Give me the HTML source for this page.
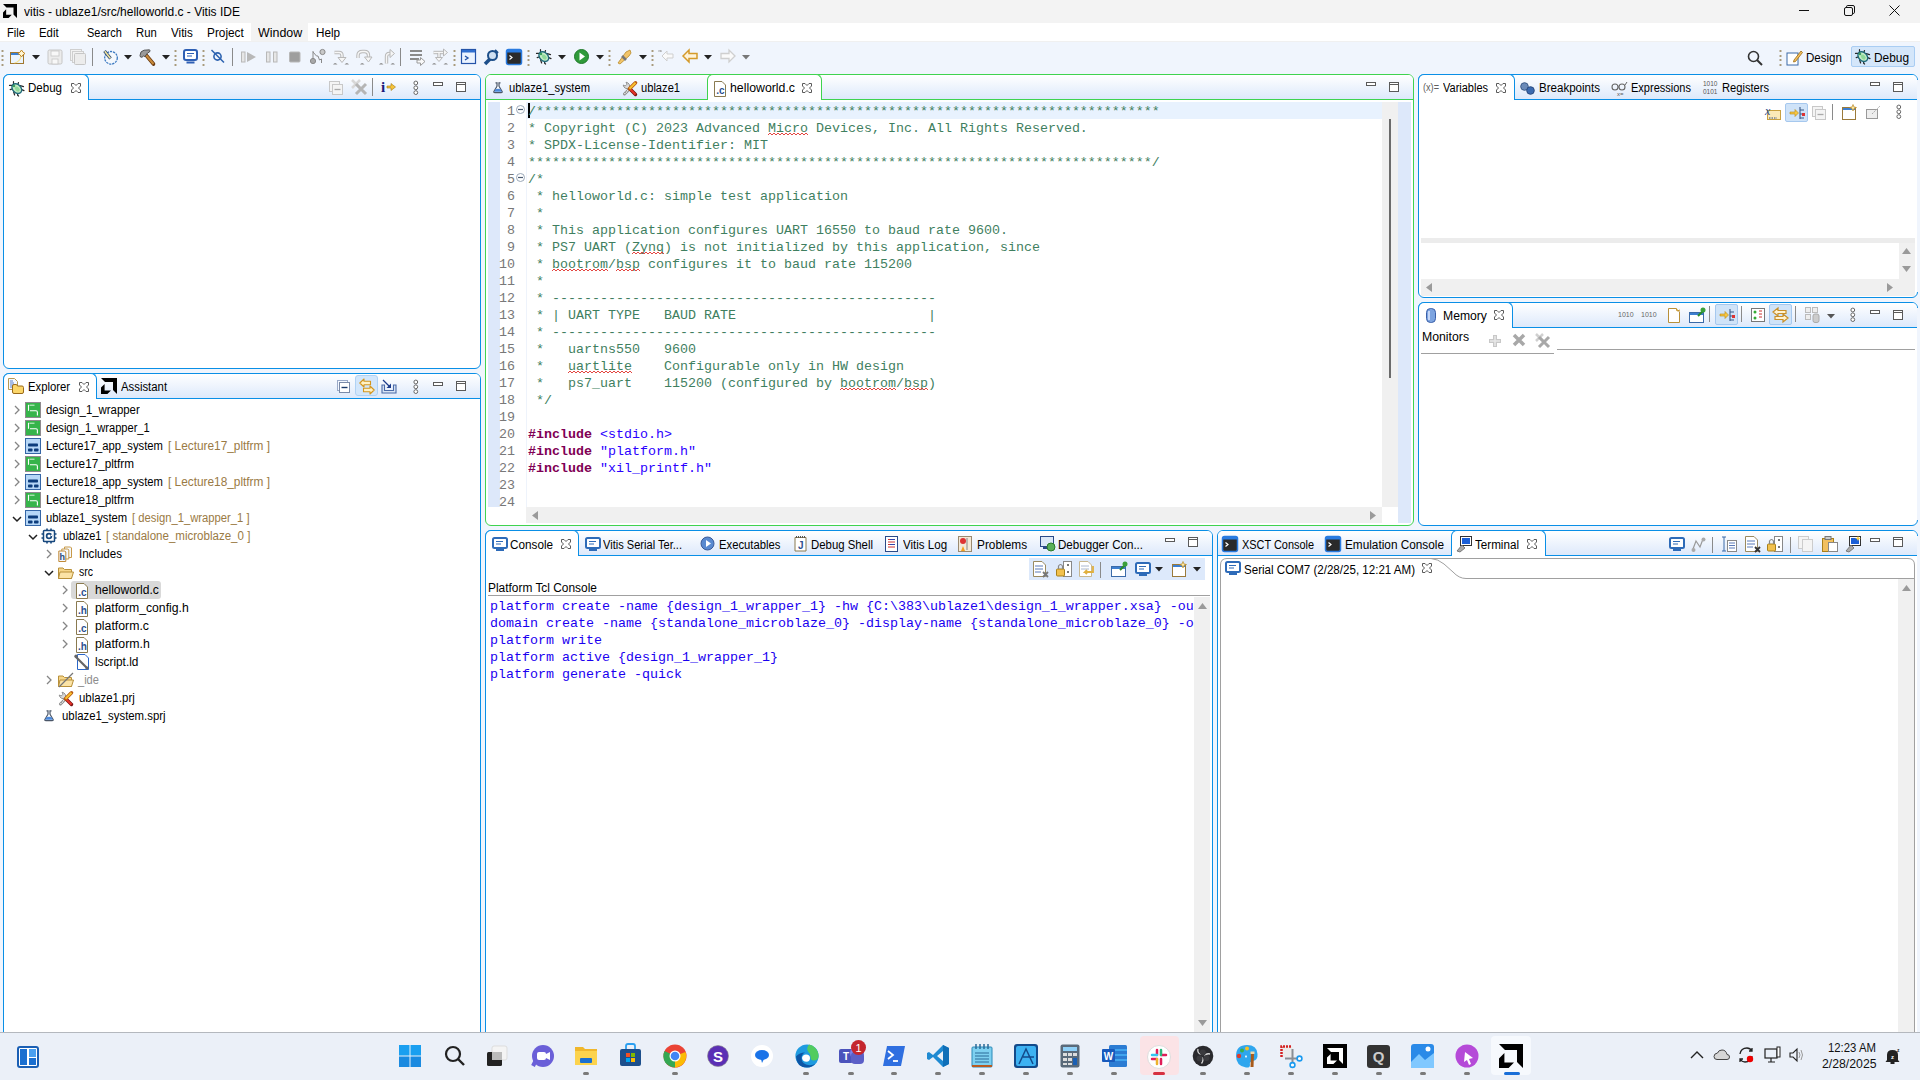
<!DOCTYPE html><html><head><meta charset="utf-8"><style>
html,body{margin:0;padding:0;}
body{width:1920px;height:1080px;overflow:hidden;position:relative;background:#f0f5fd;font-family:"Liberation Sans", sans-serif;font-size:12px;color:#000}
.r{position:absolute;}
.t{position:absolute;white-space:pre;}
svg{overflow:visible}
</style></head><body>

<div class="r" style="left:0px;top:0px;width:1920px;height:23px;background:#f3f3f3;"></div>
<svg class="r" style="left:3px;top:4px;" width="14" height="14" viewBox="0 0 14 14"><g transform="scale(0.875)"><path d="M0 0 H16 V16 L12 12 V4 H4 Z" fill="#000"/><path d="M3.5 5.5 H10.5 V12.5 Z" fill="none"/><path d="M3.6 6 L0 9.6 V16 H6.4 L10 12.4 H3.6 Z" fill="#000"/></g></svg>
<div class="t" style="left:24.00px;top:5.84px;font-size:12px;line-height:12px;color:#000;transform:scaleX(1.0006);transform-origin:0 0;">vitis - ublaze1/src/helloworld.c - Vitis IDE</div>
<div class="r" style="left:1799px;top:10px;width:10px;height:1px;background:#111;"></div>
<svg class="r" style="left:1844px;top:5px;" width="11" height="11" viewBox="0 0 11 11"><rect x="0.5" y="2.5" width="8" height="8" rx="1.5" fill="none" stroke="#111"/><path d="M2.5 2.5 V1.8 Q2.5 0.5 3.8 0.5 H9 Q10.5 0.5 10.5 2 V7.2 Q10.5 8.5 9.2 8.5 H8.5" fill="none" stroke="#111"/></svg>
<svg class="r" style="left:1889px;top:5px;" width="11" height="11" viewBox="0 0 11 11"><path d="M0.5 0.5 L10.5 10.5 M10.5 0.5 L0.5 10.5" stroke="#111" stroke-width="1"/></svg>
<div class="r" style="left:0px;top:23px;width:1920px;height:18px;background:#ffffff;"></div>
<div class="r" style="left:0px;top:41px;width:1920px;height:1px;background:#f0f0f0;"></div>
<div class="r" style="left:251px;top:23px;width:57px;height:18px;background:#f3f3f3;"></div>
<div class="t" style="left:7.10px;top:26.84px;font-size:12px;line-height:12px;color:#000;transform:scaleX(0.9290);transform-origin:0 0;">File</div>
<div class="t" style="left:39.30px;top:26.84px;font-size:12px;line-height:12px;color:#000;transform:scaleX(0.9455);transform-origin:0 0;">Edit</div>
<div class="t" style="left:87.10px;top:26.84px;font-size:12px;line-height:12px;color:#000;transform:scaleX(0.9132);transform-origin:0 0;">Search</div>
<div class="t" style="left:136.00px;top:26.84px;font-size:12px;line-height:12px;color:#000;transform:scaleX(0.9409);transform-origin:0 0;">Run</div>
<div class="t" style="left:170.90px;top:26.84px;font-size:12px;line-height:12px;color:#000;transform:scaleX(0.9689);transform-origin:0 0;">Vitis</div>
<div class="t" style="left:207.20px;top:26.84px;font-size:12px;line-height:12px;color:#000;transform:scaleX(0.9846);transform-origin:0 0;">Project</div>
<div class="t" style="left:257.70px;top:26.84px;font-size:12px;line-height:12px;color:#000;transform:scaleX(1.0363);transform-origin:0 0;">Window</div>
<div class="t" style="left:316.00px;top:26.84px;font-size:12px;line-height:12px;color:#000;transform:scaleX(0.9746);transform-origin:0 0;">Help</div>
<svg class="r" style="left:1px;top:49px;" width="3" height="17" viewBox="0 0 3 17"><rect x="0.5" y="1" width="2" height="2" rx="0.5" fill="#a89a7c"/><rect x="0.5" y="6" width="2" height="2" rx="0.5" fill="#a89a7c"/><rect x="0.5" y="10" width="2" height="2" rx="0.5" fill="#a89a7c"/><rect x="0.5" y="15" width="2" height="2" rx="0.5" fill="#a89a7c"/></svg>
<svg class="r" style="left:10px;top:49px;" width="16" height="16" viewBox="0 0 16 16"><rect x="0.5" y="3.5" width="13" height="11" fill="#eaf4fe" stroke="#a07830"/><rect x="1" y="4" width="12" height="2" fill="#3a7fd0"/><path d="M11 7.5 Q10 12.5 4.5 14" fill="none" stroke="#f5df8a" stroke-width="1.2"/><path d="M11.5 1 L12.9 3.1 L15 4.5 L12.9 5.9 L11.5 8 L10.1 5.9 L8 4.5 L10.1 3.1 Z" fill="#fff6d6" stroke="#c48a26" stroke-width="1"/></svg>
<svg class="r" style="left:32px;top:55px;" width="8" height="5" viewBox="0 0 8 5"><path d="M0 0 L8 0 L4 4.5 Z" fill="#222"/></svg>
<svg class="r" style="left:47px;top:49px;" width="16" height="16" viewBox="0 0 16 16"><rect x="1" y="1" width="14" height="14" rx="1.5" fill="#ececec" stroke="#c6c6c6"/><rect x="4" y="2" width="8" height="5" fill="#f8f8f8" stroke="#c6c6c6" stroke-width="0.8"/><rect x="5" y="10" width="6" height="5" fill="#f8f8f8" stroke="#c6c6c6" stroke-width="0.8"/></svg>
<svg class="r" style="left:70px;top:49px;" width="16" height="16" viewBox="0 0 16 16"><rect x="0.5" y="0.5" width="11" height="11" fill="#f2f2f2" stroke="#cfcfcf"/><rect x="2.5" y="2.5" width="11" height="11" fill="#f2f2f2" stroke="#cfcfcf"/><rect x="4.5" y="4.5" width="11" height="11" rx="1" fill="#ececec" stroke="#c6c6c6"/></svg>
<div class="r" style="left:92px;top:48px;width:1px;height:18px;background:#8a8a8a;"></div>
<svg class="r" style="left:103px;top:49px;" width="16" height="16" viewBox="0 0 16 16"><circle cx="8" cy="8.8" r="6.3" fill="#f4f8fd" stroke="#3a78c0" stroke-width="1.3" stroke-dasharray="2.2 0.9"/><path d="M1.5 2 L7.5 9.5" stroke="#2a4a78" stroke-width="3.2"/><path d="M1.8 2.3 L7.3 9.2" stroke="#f4e49a" stroke-width="1.6"/></svg>
<svg class="r" style="left:124px;top:55px;" width="8" height="5" viewBox="0 0 8 5"><path d="M0 0 L8 0 L4 4.5 Z" fill="#222"/></svg>
<svg class="r" style="left:139px;top:49px;" width="17" height="17" viewBox="0 0 17 17"><path d="M7 6 L14.5 15" stroke="#6a3a10" stroke-width="3.6" stroke-linecap="round"/><path d="M7 6 L14.5 15" stroke="#c88a3a" stroke-width="2"/><path d="M1 6.5 Q1 2 5 1.2 L10.5 0.8 Q11.5 1.5 10.5 3 L8.5 4 L6 7.5 L4.5 7 Q3 9 1.5 8 Z" fill="#9a9a9a" stroke="#4a4a4a" stroke-width="0.9"/></svg>
<svg class="r" style="left:162px;top:55px;" width="8" height="5" viewBox="0 0 8 5"><path d="M0 0 L8 0 L4 4.5 Z" fill="#222"/></svg>
<svg class="r" style="left:174px;top:49px;" width="3" height="17" viewBox="0 0 3 17"><rect x="0.5" y="1" width="2" height="2" rx="0.5" fill="#a89a7c"/><rect x="0.5" y="6" width="2" height="2" rx="0.5" fill="#a89a7c"/><rect x="0.5" y="10" width="2" height="2" rx="0.5" fill="#a89a7c"/><rect x="0.5" y="15" width="2" height="2" rx="0.5" fill="#a89a7c"/></svg>
<svg class="r" style="left:183px;top:49px;" width="15" height="15" viewBox="0 0 15 15"><rect x="1" y="1" width="13" height="10" rx="2" fill="#fff" stroke="#2e5fb4" stroke-width="2"/><path d="M4 4.5 H11 M4 7 H9" stroke="#2e5fb4" stroke-width="1.2"/><rect x="3.5" y="12.5" width="8" height="2" fill="#2e5fb4"/></svg>
<svg class="r" style="left:202px;top:49px;" width="3" height="17" viewBox="0 0 3 17"><rect x="0.5" y="1" width="2" height="2" rx="0.5" fill="#a89a7c"/><rect x="0.5" y="6" width="2" height="2" rx="0.5" fill="#a89a7c"/><rect x="0.5" y="10" width="2" height="2" rx="0.5" fill="#a89a7c"/><rect x="0.5" y="15" width="2" height="2" rx="0.5" fill="#a89a7c"/></svg>
<svg class="r" style="left:211px;top:49px;" width="14" height="14" viewBox="0 0 14 14"><circle cx="6.5" cy="7.5" r="3.6" fill="none" stroke="#2c62b0" stroke-width="1.6"/><path d="M0.5 1 L13 13.5" stroke="#2c62b0" stroke-width="1.5"/></svg>
<div class="r" style="left:232px;top:48px;width:1px;height:18px;background:#8a8a8a;"></div>
<svg class="r" style="left:241px;top:49px;" width="16" height="16" viewBox="0 0 16 16"><rect x="0.5" y="3" width="3.5" height="10" fill="#e6e6e6" stroke="#b8b8b8"/><path d="M6 3 L15 8 L6 13 Z" fill="#b8b8b8"/></svg>
<svg class="r" style="left:266px;top:49px;" width="12" height="16" viewBox="0 0 12 16"><rect x="0.5" y="3" width="3.5" height="10" fill="#e6e6e6" stroke="#b8b8b8"/><rect x="7.5" y="3" width="3.5" height="10" fill="#e6e6e6" stroke="#b8b8b8"/></svg>
<svg class="r" style="left:289px;top:49px;" width="12" height="16" viewBox="0 0 12 16"><rect x="0.5" y="3" width="10.5" height="10" rx="1" fill="#9e9e9e" stroke="#b8b8b8"/></svg>
<svg class="r" style="left:310px;top:49px;" width="16" height="16" viewBox="0 0 16 16"><path d="M3 2 V12 M3 3 L6.5 7 H8 L9.5 11 L11.5 10 V14" fill="none" stroke="#8a8a8a" stroke-width="1"/><circle cx="3" cy="12" r="2.6" fill="#a8a8a8" stroke="#8a8a8a"/><circle cx="12.5" cy="3" r="2.6" fill="#c8c8c8" stroke="#8a8a8a"/></svg>
<svg class="r" style="left:333px;top:49px;" width="16" height="16" viewBox="0 0 16 16"><path d="M1.5 3.5 H6 Q9 3.5 9 6.5 V9" fill="none" stroke="#b8b8b8" stroke-width="3.4" stroke-linejoin="round"/><path d="M1.5 3.5 H6 Q9 3.5 9 6.5 V9" fill="none" stroke="#f6f6f6" stroke-width="1.4"/><path d="M5 8.5 L9 13.5 L13 8.5 Z" fill="#f6f6f6" stroke="#b8b8b8"/><path d="M0 15.5 Q2 12.5 4.5 15.5 Z M11.5 15.5 Q14 12.5 16 15.5 Z" fill="#8c8c8c"/></svg>
<svg class="r" style="left:356px;top:49px;" width="16" height="16" viewBox="0 0 16 16"><path d="M2 9 V6.5 Q2 2.5 6.5 2.5 H8.5 Q12.5 2.5 12.5 6.5 V8.5" fill="none" stroke="#b8b8b8" stroke-width="3.4" stroke-linejoin="round"/><path d="M2 9 V6.5 Q2 2.5 6.5 2.5 H8.5 Q12.5 2.5 12.5 6.5 V8.5" fill="none" stroke="#f6f6f6" stroke-width="1.4"/><path d="M8.5 8 L12.5 13 L16 8 Z" fill="#f6f6f6" stroke="#b8b8b8"/><path d="M4 15.5 Q6 12.5 8.5 15.5 Z" fill="#8c8c8c"/></svg>
<svg class="r" style="left:379px;top:49px;" width="16" height="16" viewBox="0 0 16 16"><path d="M7.5 14.5 V7.5 Q7.5 4.5 10.5 4.5 H11.5" fill="none" stroke="#b8b8b8" stroke-width="3.4" stroke-linejoin="round"/><path d="M7.5 14.5 V7.5 Q7.5 4.5 10.5 4.5 H11.5" fill="none" stroke="#f6f6f6" stroke-width="1.4"/><path d="M11 0.5 L15.5 4.5 L11 8.5 Z" fill="#f6f6f6" stroke="#b8b8b8"/><path d="M0 15.5 Q2 12.5 4.5 15.5 Z M11.5 15.5 Q14 12.5 16 15.5 Z" fill="#8c8c8c"/></svg>
<div class="r" style="left:400px;top:48px;width:1px;height:18px;background:#8a8a8a;"></div>
<svg class="r" style="left:410px;top:49px;" width="16" height="17" viewBox="0 0 16 17"><rect x="0" y="1" width="12" height="2" fill="#8a8a8a"/><rect x="0" y="5" width="12" height="2" fill="#8a8a8a"/><rect x="0" y="9" width="9" height="2" fill="#8a8a8a"/><path d="M7 11 H10.5 V8.5 L15 12.5 L10.5 16.5 V14 H7 Z" fill="#fafafa" stroke="#9a9a9a"/></svg>
<svg class="r" style="left:432px;top:49px;" width="16" height="16" viewBox="0 0 16 16"><path d="M1.5 3.5 H12" fill="none" stroke="#b8b8b8" stroke-width="3.4" stroke-linejoin="round"/><path d="M1.5 3.5 H12" fill="none" stroke="#f6f6f6" stroke-width="1.4"/><path d="M11.5 0 L15.5 3.5 L11.5 7 Z" fill="#f6f6f6" stroke="#b8b8b8"/><path d="M7 4 V9" fill="none" stroke="#b8b8b8" stroke-width="3.4" stroke-linejoin="round"/><path d="M7 4 V9" fill="none" stroke="#f6f6f6" stroke-width="1.4"/><path d="M3.5 8.5 L7 12.5 L10.5 8.5 Z" fill="#f6f6f6" stroke="#b8b8b8"/><path d="M0 15.5 Q2 12.5 4.5 15.5 Z M11.5 15.5 Q14 12.5 16 15.5 Z" fill="#8c8c8c"/></svg>
<svg class="r" style="left:453px;top:49px;" width="3" height="17" viewBox="0 0 3 17"><rect x="0.5" y="1" width="2" height="2" rx="0.5" fill="#a89a7c"/><rect x="0.5" y="6" width="2" height="2" rx="0.5" fill="#a89a7c"/><rect x="0.5" y="10" width="2" height="2" rx="0.5" fill="#a89a7c"/><rect x="0.5" y="15" width="2" height="2" rx="0.5" fill="#a89a7c"/></svg>
<svg class="r" style="left:461px;top:49px;" width="15" height="15" viewBox="0 0 15 15"><rect x="0.5" y="0.5" width="14" height="14" fill="#eaf3ff" stroke="#2453a8" stroke-width="1.2"/><rect x="1" y="1" width="13" height="2.5" fill="#2f6fd0"/><path d="M4 7 L7 9 L4 11" fill="none" stroke="#2453a8" stroke-width="1.4"/></svg>
<svg class="r" style="left:483px;top:49px;" width="16" height="16" viewBox="0 0 16 16"><path d="M2 15 L7 10" stroke="#1d4f8a" stroke-width="3.5"/><circle cx="9.5" cy="6.5" r="4.5" fill="#cfe0f2" stroke="#1d4f8a" stroke-width="2"/><path d="M12 1 L15 4" stroke="#1d4f8a" stroke-width="2"/></svg>
<svg class="r" style="left:506px;top:49px;" width="16" height="16" viewBox="0 0 16 16"><rect x="0.5" y="0.5" width="15" height="15" rx="2" fill="#2a2a2a" stroke="#2a7be0" stroke-width="1.5"/><rect x="1" y="1" width="14" height="2.5" fill="#2a7be0"/><path d="M3.5 6.5 L6 8.5 L3.5 10.5" fill="none" stroke="#fff" stroke-width="1.2"/></svg>
<svg class="r" style="left:527px;top:49px;" width="3" height="17" viewBox="0 0 3 17"><rect x="0.5" y="1" width="2" height="2" rx="0.5" fill="#a89a7c"/><rect x="0.5" y="6" width="2" height="2" rx="0.5" fill="#a89a7c"/><rect x="0.5" y="10" width="2" height="2" rx="0.5" fill="#a89a7c"/><rect x="0.5" y="15" width="2" height="2" rx="0.5" fill="#a89a7c"/></svg>
<svg class="r" style="left:536px;top:49px;" width="16" height="16" viewBox="0 0 16 16"><g stroke="#2a2a2a" stroke-width="1.2" stroke-linecap="round" fill="none"><path d="M4.5 0.5 V3.5 M9.5 1.5 L8.6 4.2 M0.5 4.4 H3.8 M11.2 4.6 L14.5 5.6 M1.2 8.6 L3.8 7.8 M12.2 8.4 L15 9.6 M4.6 10.8 L5.6 14 M8.6 12.4 V14.2 L9.6 15"/></g><ellipse cx="7.8" cy="7.6" rx="4.1" ry="5.6" transform="rotate(-45 7.8 7.6)" fill="#c6ecc6" stroke="#1f6a7a" stroke-width="1.4"/><ellipse cx="8.3" cy="8.1" rx="2" ry="2.8" transform="rotate(-45 8.3 8.1)" fill="#8fd99a"/><circle cx="5" cy="5" r="1.3" fill="#3aa05a"/></svg>
<svg class="r" style="left:558px;top:55px;" width="8" height="5" viewBox="0 0 8 5"><path d="M0 0 L8 0 L4 4.5 Z" fill="#222"/></svg>
<svg class="r" style="left:574px;top:49px;" width="15" height="15" viewBox="0 0 15 15"><circle cx="7.5" cy="7.5" r="7" fill="#2f9a3a" stroke="#1f7a2a"/><path d="M5.5 3.5 L11 7.5 L5.5 11.5 Z" fill="#fff"/></svg>
<svg class="r" style="left:596px;top:55px;" width="8" height="5" viewBox="0 0 8 5"><path d="M0 0 L8 0 L4 4.5 Z" fill="#222"/></svg>
<svg class="r" style="left:608px;top:49px;" width="3" height="17" viewBox="0 0 3 17"><rect x="0.5" y="1" width="2" height="2" rx="0.5" fill="#a89a7c"/><rect x="0.5" y="6" width="2" height="2" rx="0.5" fill="#a89a7c"/><rect x="0.5" y="10" width="2" height="2" rx="0.5" fill="#a89a7c"/><rect x="0.5" y="15" width="2" height="2" rx="0.5" fill="#a89a7c"/></svg>
<svg class="r" style="left:616px;top:49px;" width="16" height="16" viewBox="0 0 16 16"><path d="M2 14 L10 3 L14 1 L15 4 L13 7 L4 15 Z" fill="#f2c46a" stroke="#b88a2a" stroke-width="0.8"/><path d="M6 7 L10 11" stroke="#777" stroke-width="2.5"/></svg>
<svg class="r" style="left:639px;top:55px;" width="8" height="5" viewBox="0 0 8 5"><path d="M0 0 L8 0 L4 4.5 Z" fill="#222"/></svg>
<svg class="r" style="left:651px;top:49px;" width="3" height="17" viewBox="0 0 3 17"><rect x="0.5" y="1" width="2" height="2" rx="0.5" fill="#a89a7c"/><rect x="0.5" y="6" width="2" height="2" rx="0.5" fill="#a89a7c"/><rect x="0.5" y="10" width="2" height="2" rx="0.5" fill="#a89a7c"/><rect x="0.5" y="15" width="2" height="2" rx="0.5" fill="#a89a7c"/></svg>
<svg class="r" style="left:658px;top:49px;" width="16" height="14" viewBox="0 0 16 14"><path d="M4 7 L9 2 V5 H15 V9 H9 V12 Z" fill="#fafafa" stroke="#cfcfcf"/><path d="M2 1 L3 3 M0 2 H4" stroke="#aaa"/></svg>
<svg class="r" style="left:682px;top:49px;" width="16" height="14" viewBox="0 0 16 14"><path d="M1 7 L7 1 V4.5 H15 V9.5 H7 V13 Z" fill="#fff3d8" stroke="#d49a2a" stroke-width="1.5"/></svg>
<svg class="r" style="left:704px;top:55px;" width="8" height="5" viewBox="0 0 8 5"><path d="M0 0 L8 0 L4 4.5 Z" fill="#222"/></svg>
<svg class="r" style="left:720px;top:49px;" width="16" height="14" viewBox="0 0 16 14"><path d="M15 7 L9 1 V4.5 H1 V9.5 H9 V13 Z" fill="#fafafa" stroke="#cfcfcf" stroke-width="1.3"/></svg>
<svg class="r" style="left:742px;top:55px;" width="8" height="5" viewBox="0 0 8 5"><path d="M0 0 L8 0 L4 4.5 Z" fill="#777"/></svg>
<svg class="r" style="left:1747px;top:50px;" width="16" height="16" viewBox="0 0 16 16"><circle cx="6.5" cy="6.5" r="5" fill="none" stroke="#333" stroke-width="1.6"/><path d="M10 10 L15 15" stroke="#333" stroke-width="2"/></svg>
<svg class="r" style="left:1779px;top:49px;" width="3" height="17" viewBox="0 0 3 17"><rect x="0.5" y="1" width="2" height="2" rx="0.5" fill="#a89a7c"/><rect x="0.5" y="6" width="2" height="2" rx="0.5" fill="#a89a7c"/><rect x="0.5" y="10" width="2" height="2" rx="0.5" fill="#a89a7c"/><rect x="0.5" y="15" width="2" height="2" rx="0.5" fill="#a89a7c"/></svg>
<svg class="r" style="left:1786px;top:49px;" width="17" height="17" viewBox="0 0 17 17"><rect x="1" y="4" width="11" height="12" fill="#fff" stroke="#3a6aa8"/><path d="M8 11 L15 2 L16.5 3.5 L9.5 12.5 L7.5 13 Z" fill="#f3c060" stroke="#9a6a10" stroke-width="0.8"/></svg>
<div class="t" style="left:1806.00px;top:51.84px;font-size:12px;line-height:12px;color:#000;transform:scaleX(0.9632);transform-origin:0 0;">Design</div>
<div class="r" style="left:1851px;top:46px;width:64px;height:21px;background:#d4e6fa;border:1px solid #a9cdf3;box-sizing:border-box;border-radius:2px"></div>
<svg class="r" style="left:1855px;top:49px;" width="16" height="16" viewBox="0 0 16 16"><g stroke="#2a2a2a" stroke-width="1.2" stroke-linecap="round" fill="none"><path d="M4.5 0.5 V3.5 M9.5 1.5 L8.6 4.2 M0.5 4.4 H3.8 M11.2 4.6 L14.5 5.6 M1.2 8.6 L3.8 7.8 M12.2 8.4 L15 9.6 M4.6 10.8 L5.6 14 M8.6 12.4 V14.2 L9.6 15"/></g><ellipse cx="7.8" cy="7.6" rx="4.1" ry="5.6" transform="rotate(-45 7.8 7.6)" fill="#c6ecc6" stroke="#1f6a7a" stroke-width="1.4"/><ellipse cx="8.3" cy="8.1" rx="2" ry="2.8" transform="rotate(-45 8.3 8.1)" fill="#8fd99a"/><circle cx="5" cy="5" r="1.3" fill="#3aa05a"/></svg>
<div class="t" style="left:1874.00px;top:51.84px;font-size:12px;line-height:12px;color:#000;transform:scaleX(0.9894);transform-origin:0 0;">Debug</div>
<div class="r" style="left:3px;top:74px;width:478px;height:295px;border:1px solid #0a8fe6;border-radius:6px;background:#fff;box-sizing:border-box;overflow:hidden">
<div class="r" style="left:0;top:0;width:100%;height:24px;background:linear-gradient(#ffffff,#dde9fb)"></div>
<div class="r" style="left:0;top:24px;width:100%;height:1px;background:#0a8fe6"></div>
</div>
<div class="r" style="left:3px;top:74px;width:86px;height:26px;background:#fff;border:1px solid #0a8fe6;border-bottom:none;border-radius:6px 6px 0 0;box-sizing:border-box"></div>
<svg class="r" style="left:9px;top:81px;" width="16" height="16" viewBox="0 0 16 16"><g stroke="#2a2a2a" stroke-width="1.2" stroke-linecap="round" fill="none"><path d="M4.5 0.5 V3.5 M9.5 1.5 L8.6 4.2 M0.5 4.4 H3.8 M11.2 4.6 L14.5 5.6 M1.2 8.6 L3.8 7.8 M12.2 8.4 L15 9.6 M4.6 10.8 L5.6 14 M8.6 12.4 V14.2 L9.6 15"/></g><ellipse cx="7.8" cy="7.6" rx="4.1" ry="5.6" transform="rotate(-45 7.8 7.6)" fill="#c6ecc6" stroke="#1f6a7a" stroke-width="1.4"/><ellipse cx="8.3" cy="8.1" rx="2" ry="2.8" transform="rotate(-45 8.3 8.1)" fill="#8fd99a"/><circle cx="5" cy="5" r="1.3" fill="#3aa05a"/></svg>
<div class="t" style="left:28.00px;top:81.84px;font-size:12px;line-height:12px;color:#000;transform:scaleX(0.9611);transform-origin:0 0;">Debug</div>
<svg class="r" style="left:71px;top:83px;" width="11" height="11" viewBox="0 0 11 11"><path d="M0.5 0.5 H3 L5 2.5 L7 0.5 H9.5 V3 L7.5 5 L9.5 7 V9.5 H7 L5 7.5 L3 9.5 H0.5 V7 L2.5 5 L0.5 3 Z" fill="#fff" stroke="#5a5a5a" stroke-width="1"/></svg>
<svg class="r" style="left:329px;top:81px;" width="14" height="14" viewBox="0 0 14 14"><rect x="0.5" y="0.5" width="10" height="10" fill="#f4f4f4" stroke="#c8c8c8"/><rect x="3.5" y="3.5" width="10" height="10" fill="#f4f4f4" stroke="#c8c8c8"/><path d="M5.5 8.5 H11.5" stroke="#aaa" stroke-width="1.3"/></svg>
<svg class="r" style="left:351px;top:79px;" width="16" height="16" viewBox="0 0 16 16"><path d="M1 1 L9 9 M9 1 L1 9" stroke="#d8d8d8" stroke-width="2.5"/><path d="M5 5 L15 15 M15 5 L5 15" stroke="#b5b5b5" stroke-width="3"/></svg>
<div class="r" style="left:372px;top:78px;width:1px;height:18px;background:#8a8a8a;"></div>
<svg class="r" style="left:381px;top:80px;" width="16" height="14" viewBox="0 0 16 14"><text x="0" y="12" font-family="Liberation Serif" font-size="15" font-weight="bold" fill="#1a1a7a">i</text><path d="M6 6 H10 V3.5 L14.5 7 L10 10.5 V8 H6 Z" fill="#f6c33a" stroke="#a57a10" stroke-width="0.6"/></svg>
<svg class="r" style="left:413px;top:80px;" width="6" height="16" viewBox="0 0 6 16"><circle cx="2.8" cy="3" r="1.9" fill="#fff" stroke="#666" stroke-width="1"/><circle cx="2.8" cy="7.8" r="1.9" fill="#fff" stroke="#666" stroke-width="1"/><circle cx="2.8" cy="12.6" r="1.9" fill="#fff" stroke="#666" stroke-width="1"/></svg>
<svg class="r" style="left:433px;top:82px;" width="10" height="4" viewBox="0 0 10 4"><rect x="0.5" y="0.5" width="9" height="3" fill="#fff" stroke="#5a5a5a"/></svg>
<svg class="r" style="left:456px;top:82px;" width="10" height="10" viewBox="0 0 10 10"><rect x="0.5" y="0.5" width="9" height="9" fill="#fff" stroke="#5a5a5a"/><line x1="0" y1="2.5" x2="10" y2="2.5" stroke="#5a5a5a"/></svg>
<div class="r" style="left:3px;top:373px;width:478px;height:720px;border:1px solid #0a8fe6;border-radius:6px;background:#fff;box-sizing:border-box;overflow:hidden">
<div class="r" style="left:0;top:0;width:100%;height:24px;background:linear-gradient(#ffffff,#dde9fb)"></div>
<div class="r" style="left:0;top:24px;width:100%;height:1px;background:#0a8fe6"></div>
</div>
<div class="r" style="left:3px;top:373px;width:94px;height:26px;background:#fff;border:1px solid #0a8fe6;border-bottom:none;border-radius:6px 6px 0 0;box-sizing:border-box"></div>
<svg class="r" style="left:8px;top:378px;" width="16" height="16" viewBox="0 0 16 16"><path d="M0.5 0.5 H6.5 L9.5 3.5 V11.5 H0.5 Z" fill="#f4f8ff" stroke="#b89a50"/><path d="M2 3 H5 M2 5 H6 M2 7 H6 M2 9 H5" stroke="#5a80c8" stroke-width="1"/><path d="M4.5 8 Q4.5 6.5 6 6.5 H8.5 L9.5 8 H14 Q15.5 8 15.5 9.5 V14 Q15.5 15.5 14 15.5 H6 Q4.5 15.5 4.5 14 Z" fill="#fbd66a" stroke="#9a6a1a"/></svg>
<div class="t" style="left:28.00px;top:380.84px;font-size:12px;line-height:12px;color:#000;transform:scaleX(0.9412);transform-origin:0 0;">Explorer</div>
<svg class="r" style="left:79px;top:382px;" width="11" height="11" viewBox="0 0 11 11"><path d="M0.5 0.5 H3 L5 2.5 L7 0.5 H9.5 V3 L7.5 5 L9.5 7 V9.5 H7 L5 7.5 L3 9.5 H0.5 V7 L2.5 5 L0.5 3 Z" fill="#fff" stroke="#5a5a5a" stroke-width="1"/></svg>
<svg class="r" style="left:101px;top:378px;" width="16" height="16" viewBox="0 0 16 16"><g transform="scale(1)"><path d="M0 0 H16 V16 L12 12 V4 H4 Z" fill="#000"/><path d="M3.5 5.5 H10.5 V12.5 Z" fill="none"/><path d="M3.6 6 L0 9.6 V16 H6.4 L10 12.4 H3.6 Z" fill="#000"/></g></svg>
<div class="t" style="left:121.00px;top:380.84px;font-size:12px;line-height:12px;color:#000;transform:scaleX(0.9460);transform-origin:0 0;">Assistant</div>
<svg class="r" style="left:337px;top:380px;" width="13" height="13" viewBox="0 0 13 13"><rect x="0.5" y="0.5" width="10" height="10" fill="#f4f8ff" stroke="#9aaac8"/><rect x="2.5" y="2.5" width="10" height="10" fill="#fff" stroke="#7a8aa8"/><path d="M4.5 7.5 H10.5" stroke="#1a3a6a" stroke-width="1.4"/></svg>
<div class="r" style="left:355px;top:375px;width:23px;height:21px;background:#d2e6fb;border:1px solid #b0d2f4;box-sizing:border-box;border-radius:3px"></div>
<svg class="r" style="left:359px;top:378px;" width="16" height="16" viewBox="0 0 16 16"><path d="M0.8 5 L5 1 V3.2 H11.5 V6.8 H5 V9 Z" fill="#fff2c6" stroke="#d4961e" stroke-width="1.1" stroke-linejoin="round"/><path d="M15.2 12 L11 8 V10.2 H4.5 V13.8 H11 V16 Z" fill="#fff2c6" stroke="#d4961e" stroke-width="1.1" stroke-linejoin="round"/></svg>
<svg class="r" style="left:381px;top:379px;" width="16" height="15" viewBox="0 0 16 15"><path d="M1 6 V14 H15 V6 H12.5 V11.5 H3.5 V6 Z" fill="#d8e4f4" stroke="#4a6aa8" stroke-width="1.1"/><path d="M2 1 L9 8" stroke="#1a3a8a" stroke-width="1.2"/><path d="M10 9 L10 4.5 L5.5 9 Z" fill="#1a3a8a"/></svg>
<svg class="r" style="left:413px;top:379px;" width="6" height="16" viewBox="0 0 6 16"><circle cx="2.8" cy="3" r="1.9" fill="#fff" stroke="#666" stroke-width="1"/><circle cx="2.8" cy="7.8" r="1.9" fill="#fff" stroke="#666" stroke-width="1"/><circle cx="2.8" cy="12.6" r="1.9" fill="#fff" stroke="#666" stroke-width="1"/></svg>
<svg class="r" style="left:433px;top:382px;" width="10" height="4" viewBox="0 0 10 4"><rect x="0.5" y="0.5" width="9" height="3" fill="#fff" stroke="#5a5a5a"/></svg>
<svg class="r" style="left:456px;top:381px;" width="10" height="10" viewBox="0 0 10 10"><rect x="0.5" y="0.5" width="9" height="9" fill="#fff" stroke="#5a5a5a"/><line x1="0" y1="2.5" x2="10" y2="2.5" stroke="#5a5a5a"/></svg>
<svg class="r" style="left:13px;top:405px;" width="8" height="10" viewBox="0 0 8 10"><path d="M2 1 L6 5 L2 9" fill="none" stroke="#858585" stroke-width="1.3"/></svg>
<svg class="r" style="left:25px;top:402px;" width="16" height="16" viewBox="0 0 16 16"><rect x="0.5" y="0.5" width="15" height="15" fill="#36b44a" stroke="#8e8a8e"/><path d="M3.5 2.8 V8.8" stroke="#fff" stroke-width="1.1"/><path d="M4.5 3.2 H9.5" stroke="#d8f5d8" stroke-width="1"/><path d="M5 8.8 H11 Q12.4 8.8 12.4 10.2 V13.6" fill="none" stroke="#fff" stroke-width="1.1"/></svg>
<div class="t" style="left:46.25px;top:403.84px;font-size:12px;line-height:12px;color:#000;transform:scaleX(0.9494);transform-origin:0 0;">design_1_wrapper</div>
<svg class="r" style="left:13px;top:423px;" width="8" height="10" viewBox="0 0 8 10"><path d="M2 1 L6 5 L2 9" fill="none" stroke="#858585" stroke-width="1.3"/></svg>
<svg class="r" style="left:25px;top:420px;" width="16" height="16" viewBox="0 0 16 16"><rect x="0.5" y="0.5" width="15" height="15" fill="#36b44a" stroke="#8e8a8e"/><path d="M3.5 2.8 V8.8" stroke="#fff" stroke-width="1.1"/><path d="M4.5 3.2 H9.5" stroke="#d8f5d8" stroke-width="1"/><path d="M5 8.8 H11 Q12.4 8.8 12.4 10.2 V13.6" fill="none" stroke="#fff" stroke-width="1.1"/></svg>
<div class="t" style="left:46.25px;top:421.84px;font-size:12px;line-height:12px;color:#000;transform:scaleX(0.9253);transform-origin:0 0;">design_1_wrapper_1</div>
<svg class="r" style="left:13px;top:441px;" width="8" height="10" viewBox="0 0 8 10"><path d="M2 1 L6 5 L2 9" fill="none" stroke="#858585" stroke-width="1.3"/></svg>
<svg class="r" style="left:25px;top:438px;" width="16" height="16" viewBox="0 0 16 16"><rect x="0.5" y="0.5" width="15" height="15" fill="#b6d7f7" stroke="#3566a6"/><rect x="3" y="5.5" width="10" height="3" rx="0.8" fill="#0d3d7c"/><rect x="3" y="10.5" width="4.5" height="3" rx="0.8" fill="#0d3d7c"/><rect x="9" y="10.5" width="4.5" height="3" rx="0.8" fill="#0d3d7c"/></svg>
<div class="t" style="left:46.25px;top:439.84px;font-size:12px;line-height:12px;color:#000;transform:scaleX(0.9379);transform-origin:0 0;">Lecture17_app_system</div>
<div class="t" style="left:167.50px;top:439.84px;font-size:12px;line-height:12px;color:#9a7a44;transform:scaleX(0.9867);transform-origin:0 0;">[ Lecture17_pltfrm ]</div>
<svg class="r" style="left:13px;top:459px;" width="8" height="10" viewBox="0 0 8 10"><path d="M2 1 L6 5 L2 9" fill="none" stroke="#858585" stroke-width="1.3"/></svg>
<svg class="r" style="left:25px;top:456px;" width="16" height="16" viewBox="0 0 16 16"><rect x="0.5" y="0.5" width="15" height="15" fill="#36b44a" stroke="#8e8a8e"/><path d="M3.5 2.8 V8.8" stroke="#fff" stroke-width="1.1"/><path d="M4.5 3.2 H9.5" stroke="#d8f5d8" stroke-width="1"/><path d="M5 8.8 H11 Q12.4 8.8 12.4 10.2 V13.6" fill="none" stroke="#fff" stroke-width="1.1"/></svg>
<div class="t" style="left:46.25px;top:457.84px;font-size:12px;line-height:12px;color:#000;transform:scaleX(0.9778);transform-origin:0 0;">Lecture17_pltfrm</div>
<svg class="r" style="left:13px;top:477px;" width="8" height="10" viewBox="0 0 8 10"><path d="M2 1 L6 5 L2 9" fill="none" stroke="#858585" stroke-width="1.3"/></svg>
<svg class="r" style="left:25px;top:474px;" width="16" height="16" viewBox="0 0 16 16"><rect x="0.5" y="0.5" width="15" height="15" fill="#b6d7f7" stroke="#3566a6"/><rect x="3" y="5.5" width="10" height="3" rx="0.8" fill="#0d3d7c"/><rect x="3" y="10.5" width="4.5" height="3" rx="0.8" fill="#0d3d7c"/><rect x="9" y="10.5" width="4.5" height="3" rx="0.8" fill="#0d3d7c"/></svg>
<div class="t" style="left:46.25px;top:475.84px;font-size:12px;line-height:12px;color:#000;transform:scaleX(0.9379);transform-origin:0 0;">Lecture18_app_system</div>
<div class="t" style="left:167.50px;top:475.84px;font-size:12px;line-height:12px;color:#9a7a44;transform:scaleX(0.9867);transform-origin:0 0;">[ Lecture18_pltfrm ]</div>
<svg class="r" style="left:13px;top:495px;" width="8" height="10" viewBox="0 0 8 10"><path d="M2 1 L6 5 L2 9" fill="none" stroke="#858585" stroke-width="1.3"/></svg>
<svg class="r" style="left:25px;top:492px;" width="16" height="16" viewBox="0 0 16 16"><rect x="0.5" y="0.5" width="15" height="15" fill="#36b44a" stroke="#8e8a8e"/><path d="M3.5 2.8 V8.8" stroke="#fff" stroke-width="1.1"/><path d="M4.5 3.2 H9.5" stroke="#d8f5d8" stroke-width="1"/><path d="M5 8.8 H11 Q12.4 8.8 12.4 10.2 V13.6" fill="none" stroke="#fff" stroke-width="1.1"/></svg>
<div class="t" style="left:46.25px;top:493.84px;font-size:12px;line-height:12px;color:#000;transform:scaleX(0.9778);transform-origin:0 0;">Lecture18_pltfrm</div>
<svg class="r" style="left:12px;top:515px;" width="10" height="8" viewBox="0 0 10 8"><path d="M1 2 L5 6 L9 2" fill="none" stroke="#202020" stroke-width="1.5"/></svg>
<svg class="r" style="left:25px;top:510px;" width="16" height="16" viewBox="0 0 16 16"><rect x="0.5" y="0.5" width="15" height="15" fill="#b6d7f7" stroke="#3566a6"/><rect x="3" y="5.5" width="10" height="3" rx="0.8" fill="#0d3d7c"/><rect x="3" y="10.5" width="4.5" height="3" rx="0.8" fill="#0d3d7c"/><rect x="9" y="10.5" width="4.5" height="3" rx="0.8" fill="#0d3d7c"/></svg>
<div class="t" style="left:46.25px;top:511.84px;font-size:12px;line-height:12px;color:#000;transform:scaleX(0.9366);transform-origin:0 0;">ublaze1_system</div>
<div class="t" style="left:131.90px;top:511.84px;font-size:12px;line-height:12px;color:#9a7a44;transform:scaleX(0.9372);transform-origin:0 0;">[ design_1_wrapper_1 ]</div>
<svg class="r" style="left:28px;top:533px;" width="10" height="8" viewBox="0 0 10 8"><path d="M1 2 L5 6 L9 2" fill="none" stroke="#202020" stroke-width="1.5"/></svg>
<svg class="r" style="left:41px;top:528px;" width="16" height="16" viewBox="0 0 16 16"><rect x="2.5" y="2.5" width="11" height="11" rx="0.8" fill="#fff" stroke="#17487e" stroke-width="1.5"/><path d="M6 0.5 V3 M10 0.5 V3 M6 13 V15.5 M10 13 V15.5 M0.5 6 H3 M0.5 10 H3 M13 6 H15.5 M13 10 H15.5" stroke="#17487e" stroke-width="1.6"/><circle cx="8" cy="8" r="2.4" fill="none" stroke="#17487e" stroke-width="1.7"/><path d="M9.8 7.2 H11" stroke="#fff" stroke-width="1.4"/></svg>
<div class="t" style="left:62.50px;top:529.84px;font-size:12px;line-height:12px;color:#000;transform:scaleX(0.9143);transform-origin:0 0;">ublaze1</div>
<div class="t" style="left:105.60px;top:529.84px;font-size:12px;line-height:12px;color:#9a7a44;transform:scaleX(0.9619);transform-origin:0 0;">[ standalone_microblaze_0 ]</div>
<svg class="r" style="left:45px;top:549px;" width="8" height="10" viewBox="0 0 8 10"><path d="M2 1 L6 5 L2 9" fill="none" stroke="#858585" stroke-width="1.3"/></svg>
<svg class="r" style="left:58px;top:546px;" width="16" height="16" viewBox="0 0 16 16"><path d="M6.5 1 H12.5 L13.5 2 V11.5 H6.5 Z" fill="#f4f8ff" stroke="#c89a48"/><path d="M3.8 3 H9.8 L10.8 4 V13 H3.8 Z" fill="#f4f8ff" stroke="#c89a48"/><path d="M0.8 5 H6.8 L7.8 6 V15.5 H0.8 Z" fill="#f4f8ff" stroke="#c08a38"/><text x="4.3" y="14" font-family="Liberation Sans" font-size="9" font-weight="bold" fill="#2a4a7a" text-anchor="middle">h</text></svg>
<div class="t" style="left:78.75px;top:547.84px;font-size:12px;line-height:12px;color:#000;transform:scaleX(0.9609);transform-origin:0 0;">Includes</div>
<svg class="r" style="left:44px;top:569px;" width="10" height="8" viewBox="0 0 10 8"><path d="M1 2 L5 6 L9 2" fill="none" stroke="#202020" stroke-width="1.5"/></svg>
<svg class="r" style="left:58px;top:566px;" width="16" height="13" viewBox="0 0 16 13"><path d="M0.5 2 H5 L6.5 3.5 H13.5 V12.5 H0.5 Z" fill="#f6d68a" stroke="#b8903a"/><path d="M2 6 H15.5 L13.5 12.5 H0.5 Z" fill="#fbe3a6" stroke="#b8903a"/></svg>
<div class="t" style="left:78.75px;top:565.84px;font-size:12px;line-height:12px;color:#000;transform:scaleX(0.8750);transform-origin:0 0;">src</div>
<div class="r" style="left:71px;top:581px;width:90px;height:18px;background:#d9d9d9;border-radius:3px"></div>
<svg class="r" style="left:61px;top:585px;" width="8" height="10" viewBox="0 0 8 10"><path d="M2 1 L6 5 L2 9" fill="none" stroke="#858585" stroke-width="1.3"/></svg>
<svg class="r" style="left:76px;top:583px;" width="12" height="16" viewBox="0 0 12 16"><path d="M0.5 0.5 H8 L11.5 4 V15.5 H0.5 Z" fill="#fff" stroke="#8a7a50"/><text x="6.5" y="13" font-family="Liberation Sans" font-size="10" font-weight="bold" fill="#2c4f8e" text-anchor="middle">.c</text></svg>
<div class="t" style="left:94.90px;top:583.84px;font-size:12px;line-height:12px;color:#000;transform:scaleX(1.0083);transform-origin:0 0;">helloworld.c</div>
<svg class="r" style="left:61px;top:603px;" width="8" height="10" viewBox="0 0 8 10"><path d="M2 1 L6 5 L2 9" fill="none" stroke="#858585" stroke-width="1.3"/></svg>
<svg class="r" style="left:76px;top:601px;" width="12" height="16" viewBox="0 0 12 16"><path d="M0.5 0.5 H8 L11.5 4 V15.5 H0.5 Z" fill="#fff" stroke="#8a7a50"/><text x="6.5" y="13" font-family="Liberation Sans" font-size="10" font-weight="bold" fill="#2c4f8e" text-anchor="middle">.h</text></svg>
<div class="t" style="left:94.90px;top:601.84px;font-size:12px;line-height:12px;color:#000;transform:scaleX(1.0185);transform-origin:0 0;">platform_config.h</div>
<svg class="r" style="left:61px;top:621px;" width="8" height="10" viewBox="0 0 8 10"><path d="M2 1 L6 5 L2 9" fill="none" stroke="#858585" stroke-width="1.3"/></svg>
<svg class="r" style="left:76px;top:619px;" width="12" height="16" viewBox="0 0 12 16"><path d="M0.5 0.5 H8 L11.5 4 V15.5 H0.5 Z" fill="#fff" stroke="#8a7a50"/><text x="6.5" y="13" font-family="Liberation Sans" font-size="10" font-weight="bold" fill="#2c4f8e" text-anchor="middle">.c</text></svg>
<div class="t" style="left:94.90px;top:619.84px;font-size:12px;line-height:12px;color:#000;transform:scaleX(1.0242);transform-origin:0 0;">platform.c</div>
<svg class="r" style="left:61px;top:639px;" width="8" height="10" viewBox="0 0 8 10"><path d="M2 1 L6 5 L2 9" fill="none" stroke="#858585" stroke-width="1.3"/></svg>
<svg class="r" style="left:76px;top:637px;" width="12" height="16" viewBox="0 0 12 16"><path d="M0.5 0.5 H8 L11.5 4 V15.5 H0.5 Z" fill="#fff" stroke="#8a7a50"/><text x="6.5" y="13" font-family="Liberation Sans" font-size="10" font-weight="bold" fill="#2c4f8e" text-anchor="middle">.h</text></svg>
<div class="t" style="left:94.90px;top:637.84px;font-size:12px;line-height:12px;color:#000;transform:scaleX(1.0267);transform-origin:0 0;">platform.h</div>
<svg class="r" style="left:74px;top:654px;" width="16" height="16" viewBox="0 0 16 16"><path d="M3.5 0.5 H11 L14.5 4 V15.5 H3.5 Z" fill="#fff" stroke="#2a66c8"/><path d="M1 2 L13 14" stroke="#666" stroke-width="2.2"/><circle cx="2" cy="2" r="1.6" fill="#666"/><circle cx="13" cy="14" r="1.6" fill="#666"/></svg>
<div class="t" style="left:94.90px;top:655.84px;font-size:12px;line-height:12px;color:#000;transform:scaleX(0.9864);transform-origin:0 0;">lscript.ld</div>
<svg class="r" style="left:45px;top:675px;" width="8" height="10" viewBox="0 0 8 10"><path d="M2 1 L6 5 L2 9" fill="none" stroke="#858585" stroke-width="1.3"/></svg>
<svg class="r" style="left:58px;top:674px;" width="16" height="13" viewBox="0 0 16 13"><path d="M0.5 2 H5 L6.5 3.5 H13.5 V12.5 H0.5 Z" fill="#f6d68a" stroke="#b8903a"/><path d="M2 6 H15.5 L13.5 12.5 H0.5 Z" fill="#fbe3a6" stroke="#b8903a"/></svg>
<svg class="r" style="left:58px;top:672px;" width="16" height="16" viewBox="0 0 16 16"><path d="M1 15 L15 1" stroke="#777" stroke-width="1.2"/></svg>
<div class="t" style="left:78.03px;top:673.84px;font-size:12px;line-height:12px;color:#8c8c8c;transform:scaleX(0.9217);transform-origin:0 0;">_ide</div>
<svg class="r" style="left:58px;top:691px;" width="16" height="16" viewBox="0 0 16 16"><path d="M2.5 13 L7.5 8" stroke="#8a8a8a" stroke-width="3" stroke-linecap="round"/><path d="M2.5 13 L7.5 8" stroke="#f4f4f4" stroke-width="1.4" stroke-dasharray="1.2 0.8"/><path d="M7.5 7.5 Q2 8.5 1.2 4 L3.2 5 L5 3.2 L4 1.2 Q8.5 2 7.5 7.5 Z" fill="#d8d8d8" stroke="#8a8a8a" stroke-width="0.9"/><path d="M8 8 L13.5 13.5" stroke="#7a1010" stroke-width="3.4" stroke-linecap="round"/><path d="M8 8 L13.5 13.5" stroke="#e8342a" stroke-width="2"/><path d="M13.5 1.8 L7.5 7.8" stroke="#b85a10" stroke-width="3.6" stroke-linecap="round"/><path d="M13.5 1.8 L7.5 7.8" stroke="#f8c030" stroke-width="2"/></svg>
<div class="t" style="left:78.60px;top:691.84px;font-size:12px;line-height:12px;color:#000;transform:scaleX(0.9498);transform-origin:0 0;">ublaze1.prj</div>
<svg class="r" style="left:44px;top:710px;" width="10" height="11" viewBox="0 0 10 11"><path d="M2.5 0.8 H4 V4.2 L0.8 9.6 Q0.6 10.6 1.8 10.6 H8.2 Q9.4 10.6 9.2 9.6 L6 4.2 V0.8 H7.5" fill="#fbfdff" stroke="#4a5668" stroke-width="1.2"/><path d="M2.2 7.6 Q5 5.8 7.8 7.6 L8.8 9.8 H1.2 Z" fill="#4a88dc"/></svg>
<div class="t" style="left:62.20px;top:709.84px;font-size:12px;line-height:12px;color:#000;transform:scaleX(0.9463);transform-origin:0 0;">ublaze1_system.sprj</div>
<div class="r" style="left:485px;top:74px;width:929px;height:452px;border:1px solid #3fd34f;border-radius:6px;background:#fff;box-sizing:border-box;overflow:hidden">
<div class="r" style="left:0;top:0;width:100%;height:24px;background:linear-gradient(#ffffff,#dde9fb)"></div>
<div class="r" style="left:0;top:24px;width:100%;height:1px;background:#3fd34f"></div>
</div>
<div class="r" style="left:707px;top:74px;width:115px;height:26px;background:#fff;border:1px solid #3fd34f;border-bottom:none;border-radius:6px 6px 0 0;box-sizing:border-box"></div>
<svg class="r" style="left:493px;top:82px;" width="10" height="11" viewBox="0 0 10 11"><path d="M2.5 0.8 H4 V4.2 L0.8 9.6 Q0.6 10.6 1.8 10.6 H8.2 Q9.4 10.6 9.2 9.6 L6 4.2 V0.8 H7.5" fill="#fbfdff" stroke="#4a5668" stroke-width="1.2"/><path d="M2.2 7.6 Q5 5.8 7.8 7.6 L8.8 9.8 H1.2 Z" fill="#4a88dc"/></svg>
<div class="t" style="left:509.00px;top:81.84px;font-size:12px;line-height:12px;color:#000;transform:scaleX(0.9337);transform-origin:0 0;">ublaze1_system</div>
<svg class="r" style="left:622px;top:81px;" width="16" height="16" viewBox="0 0 16 16"><path d="M2.5 13 L7.5 8" stroke="#8a8a8a" stroke-width="3" stroke-linecap="round"/><path d="M2.5 13 L7.5 8" stroke="#f4f4f4" stroke-width="1.4" stroke-dasharray="1.2 0.8"/><path d="M7.5 7.5 Q2 8.5 1.2 4 L3.2 5 L5 3.2 L4 1.2 Q8.5 2 7.5 7.5 Z" fill="#d8d8d8" stroke="#8a8a8a" stroke-width="0.9"/><path d="M8 8 L13.5 13.5" stroke="#7a1010" stroke-width="3.4" stroke-linecap="round"/><path d="M8 8 L13.5 13.5" stroke="#e8342a" stroke-width="2"/><path d="M13.5 1.8 L7.5 7.8" stroke="#b85a10" stroke-width="3.6" stroke-linecap="round"/><path d="M13.5 1.8 L7.5 7.8" stroke="#f8c030" stroke-width="2"/></svg>
<div class="t" style="left:641.00px;top:81.84px;font-size:12px;line-height:12px;color:#000;transform:scaleX(0.9286);transform-origin:0 0;">ublaze1</div>
<svg class="r" style="left:714px;top:81px;" width="12" height="16" viewBox="0 0 12 16"><path d="M0.5 0.5 H8 L11.5 4 V15.5 H0.5 Z" fill="#fff" stroke="#8a7a50"/><text x="6.5" y="13" font-family="Liberation Sans" font-size="10" font-weight="bold" fill="#2c4f8e" text-anchor="middle">.c</text></svg>
<div class="t" style="left:730.00px;top:81.84px;font-size:12px;line-height:12px;color:#000;transform:scaleX(1.0256);transform-origin:0 0;">helloworld.c</div>
<svg class="r" style="left:802px;top:83px;" width="11" height="11" viewBox="0 0 11 11"><path d="M0.5 0.5 H3 L5 2.5 L7 0.5 H9.5 V3 L7.5 5 L9.5 7 V9.5 H7 L5 7.5 L3 9.5 H0.5 V7 L2.5 5 L0.5 3 Z" fill="#fff" stroke="#5a5a5a" stroke-width="1"/></svg>
<svg class="r" style="left:1366px;top:82px;" width="10" height="4" viewBox="0 0 10 4"><rect x="0.5" y="0.5" width="9" height="3" fill="#fff" stroke="#5a5a5a"/></svg>
<svg class="r" style="left:1389px;top:82px;" width="10" height="10" viewBox="0 0 10 10"><rect x="0.5" y="0.5" width="9" height="9" fill="#fff" stroke="#5a5a5a"/><line x1="0" y1="2.5" x2="10" y2="2.5" stroke="#5a5a5a"/></svg>
<div class="r" style="left:488px;top:102px;width:12px;height:405px;background:#dde8fa;"></div>
<div class="r" style="left:526px;top:102px;width:1px;height:405px;background:#eef3fb;"></div>
<div class="r" style="left:527px;top:102px;width:855px;height:17px;background:#e8f2fe;"></div>
<div class="r" style="left:528px;top:103px;width:2px;height:15px;background:#000;"></div>
<div class="r" style="left:526px;top:507px;width:856px;height:16px;background:#f0f0f0;"></div>
<svg class="r" style="left:532px;top:511px;" width="6" height="9" viewBox="0 0 6 9"><path d="M6 0 L0 4.5 L6 9 Z" fill="#9a9a9a"/></svg>
<svg class="r" style="left:1370px;top:511px;" width="6" height="9" viewBox="0 0 6 9"><path d="M0 0 L6 4.5 L0 9 Z" fill="#9a9a9a"/></svg>
<div class="r" style="left:1382px;top:102px;width:16px;height:405px;background:#f0f0f0;"></div>
<div class="r" style="left:1389px;top:119px;width:2px;height:259px;background:#6b6b6b;"></div>
<div class="r" style="left:1398px;top:102px;width:13px;height:421px;background:#dde8fa;"></div>
<div class="t" style="left:507.00px;top:104.78px;font-size:13.333px;line-height:13.333px;color:#787878;font-family:'Liberation Mono', monospace;">1</div>
<div class="t" style="left:528.00px;top:104.78px;font-size:13.333px;line-height:13.333px;color:#3f7f5f;font-family:'Liberation Mono', monospace;">/******************************************************************************</div>
<div class="t" style="left:507.00px;top:121.78px;font-size:13.333px;line-height:13.333px;color:#787878;font-family:'Liberation Mono', monospace;">2</div>
<div class="t" style="left:528.00px;top:121.78px;font-size:13.333px;line-height:13.333px;color:#3f7f5f;font-family:'Liberation Mono', monospace;">* Copyright (C) 2023 Advanced Micro Devices, Inc. All Rights Reserved.</div>
<div class="t" style="left:507.00px;top:138.78px;font-size:13.333px;line-height:13.333px;color:#787878;font-family:'Liberation Mono', monospace;">3</div>
<div class="t" style="left:528.00px;top:138.78px;font-size:13.333px;line-height:13.333px;color:#3f7f5f;font-family:'Liberation Mono', monospace;">* SPDX-License-Identifier: MIT</div>
<div class="t" style="left:507.00px;top:155.78px;font-size:13.333px;line-height:13.333px;color:#787878;font-family:'Liberation Mono', monospace;">4</div>
<div class="t" style="left:528.00px;top:155.78px;font-size:13.333px;line-height:13.333px;color:#3f7f5f;font-family:'Liberation Mono', monospace;">******************************************************************************/</div>
<div class="t" style="left:507.00px;top:172.78px;font-size:13.333px;line-height:13.333px;color:#787878;font-family:'Liberation Mono', monospace;">5</div>
<div class="t" style="left:528.00px;top:172.78px;font-size:13.333px;line-height:13.333px;color:#3f7f5f;font-family:'Liberation Mono', monospace;">/*</div>
<div class="t" style="left:507.00px;top:189.78px;font-size:13.333px;line-height:13.333px;color:#787878;font-family:'Liberation Mono', monospace;">6</div>
<div class="t" style="left:528.00px;top:189.78px;font-size:13.333px;line-height:13.333px;color:#3f7f5f;font-family:'Liberation Mono', monospace;"> * helloworld.c: simple test application</div>
<div class="t" style="left:507.00px;top:206.78px;font-size:13.333px;line-height:13.333px;color:#787878;font-family:'Liberation Mono', monospace;">7</div>
<div class="t" style="left:528.00px;top:206.78px;font-size:13.333px;line-height:13.333px;color:#3f7f5f;font-family:'Liberation Mono', monospace;"> *</div>
<div class="t" style="left:507.00px;top:223.78px;font-size:13.333px;line-height:13.333px;color:#787878;font-family:'Liberation Mono', monospace;">8</div>
<div class="t" style="left:528.00px;top:223.78px;font-size:13.333px;line-height:13.333px;color:#3f7f5f;font-family:'Liberation Mono', monospace;"> * This application configures UART 16550 to baud rate 9600.</div>
<div class="t" style="left:507.00px;top:240.78px;font-size:13.333px;line-height:13.333px;color:#787878;font-family:'Liberation Mono', monospace;">9</div>
<div class="t" style="left:528.00px;top:240.78px;font-size:13.333px;line-height:13.333px;color:#3f7f5f;font-family:'Liberation Mono', monospace;"> * PS7 UART (Zynq) is not initialized by this application, since</div>
<div class="t" style="left:499.00px;top:257.78px;font-size:13.333px;line-height:13.333px;color:#787878;font-family:'Liberation Mono', monospace;">10</div>
<div class="t" style="left:528.00px;top:257.78px;font-size:13.333px;line-height:13.333px;color:#3f7f5f;font-family:'Liberation Mono', monospace;"> * bootrom/bsp configures it to baud rate 115200</div>
<div class="t" style="left:499.00px;top:274.78px;font-size:13.333px;line-height:13.333px;color:#787878;font-family:'Liberation Mono', monospace;">11</div>
<div class="t" style="left:528.00px;top:274.78px;font-size:13.333px;line-height:13.333px;color:#3f7f5f;font-family:'Liberation Mono', monospace;"> *</div>
<div class="t" style="left:499.00px;top:291.78px;font-size:13.333px;line-height:13.333px;color:#787878;font-family:'Liberation Mono', monospace;">12</div>
<div class="t" style="left:528.00px;top:291.78px;font-size:13.333px;line-height:13.333px;color:#3f7f5f;font-family:'Liberation Mono', monospace;"> * ------------------------------------------------</div>
<div class="t" style="left:499.00px;top:308.78px;font-size:13.333px;line-height:13.333px;color:#787878;font-family:'Liberation Mono', monospace;">13</div>
<div class="t" style="left:528.00px;top:308.78px;font-size:13.333px;line-height:13.333px;color:#3f7f5f;font-family:'Liberation Mono', monospace;"> * | UART TYPE   BAUD RATE                        |</div>
<div class="t" style="left:499.00px;top:325.78px;font-size:13.333px;line-height:13.333px;color:#787878;font-family:'Liberation Mono', monospace;">14</div>
<div class="t" style="left:528.00px;top:325.78px;font-size:13.333px;line-height:13.333px;color:#3f7f5f;font-family:'Liberation Mono', monospace;"> * ------------------------------------------------</div>
<div class="t" style="left:499.00px;top:342.78px;font-size:13.333px;line-height:13.333px;color:#787878;font-family:'Liberation Mono', monospace;">15</div>
<div class="t" style="left:528.00px;top:342.78px;font-size:13.333px;line-height:13.333px;color:#3f7f5f;font-family:'Liberation Mono', monospace;"> *   uartns550   9600</div>
<div class="t" style="left:499.00px;top:359.78px;font-size:13.333px;line-height:13.333px;color:#787878;font-family:'Liberation Mono', monospace;">16</div>
<div class="t" style="left:528.00px;top:359.78px;font-size:13.333px;line-height:13.333px;color:#3f7f5f;font-family:'Liberation Mono', monospace;"> *   uartlite    Configurable only in HW design</div>
<div class="t" style="left:499.00px;top:376.78px;font-size:13.333px;line-height:13.333px;color:#787878;font-family:'Liberation Mono', monospace;">17</div>
<div class="t" style="left:528.00px;top:376.78px;font-size:13.333px;line-height:13.333px;color:#3f7f5f;font-family:'Liberation Mono', monospace;"> *   ps7_uart    115200 (configured by bootrom/bsp)</div>
<div class="t" style="left:499.00px;top:393.78px;font-size:13.333px;line-height:13.333px;color:#787878;font-family:'Liberation Mono', monospace;">18</div>
<div class="t" style="left:528.00px;top:393.78px;font-size:13.333px;line-height:13.333px;color:#3f7f5f;font-family:'Liberation Mono', monospace;"> */</div>
<div class="t" style="left:499.00px;top:410.78px;font-size:13.333px;line-height:13.333px;color:#787878;font-family:'Liberation Mono', monospace;">19</div>
<div class="t" style="left:528.00px;top:410.78px;font-size:13.333px;line-height:13.333px;color:#3f7f5f;font-family:'Liberation Mono', monospace;"></div>
<div class="t" style="left:499.00px;top:427.78px;font-size:13.333px;line-height:13.333px;color:#787878;font-family:'Liberation Mono', monospace;">20</div>
<div class="t" style="left:528.00px;top:427.78px;font-size:13.333px;line-height:13.333px;color:#7f0055;font-family:'Liberation Mono', monospace;font-weight:bold;">#include</div>
<div class="t" style="left:600.00px;top:427.78px;font-size:13.333px;line-height:13.333px;color:#2a00ff;font-family:'Liberation Mono', monospace;">&lt;stdio.h&gt;</div>
<div class="t" style="left:499.00px;top:444.78px;font-size:13.333px;line-height:13.333px;color:#787878;font-family:'Liberation Mono', monospace;">21</div>
<div class="t" style="left:528.00px;top:444.78px;font-size:13.333px;line-height:13.333px;color:#7f0055;font-family:'Liberation Mono', monospace;font-weight:bold;">#include</div>
<div class="t" style="left:600.00px;top:444.78px;font-size:13.333px;line-height:13.333px;color:#2a00ff;font-family:'Liberation Mono', monospace;">"platform.h"</div>
<div class="t" style="left:499.00px;top:461.78px;font-size:13.333px;line-height:13.333px;color:#787878;font-family:'Liberation Mono', monospace;">22</div>
<div class="t" style="left:528.00px;top:461.78px;font-size:13.333px;line-height:13.333px;color:#7f0055;font-family:'Liberation Mono', monospace;font-weight:bold;">#include</div>
<div class="t" style="left:600.00px;top:461.78px;font-size:13.333px;line-height:13.333px;color:#2a00ff;font-family:'Liberation Mono', monospace;">"xil_printf.h"</div>
<div class="t" style="left:499.00px;top:478.78px;font-size:13.333px;line-height:13.333px;color:#787878;font-family:'Liberation Mono', monospace;">23</div>
<div class="t" style="left:528.00px;top:478.78px;font-size:13.333px;line-height:13.333px;color:#3f7f5f;font-family:'Liberation Mono', monospace;"></div>
<div class="t" style="left:499.00px;top:495.78px;font-size:13.333px;line-height:13.333px;color:#787878;font-family:'Liberation Mono', monospace;">24</div>
<div class="t" style="left:528.00px;top:495.78px;font-size:13.333px;line-height:13.333px;color:#3f7f5f;font-family:'Liberation Mono', monospace;"></div>
<svg class="r" style="left:516px;top:105px;" width="9" height="9" viewBox="0 0 9 9"><circle cx="4.5" cy="4.5" r="4" fill="#fff" stroke="#9aa8b8"/><path d="M2 4.5 H7" stroke="#4a5a70" stroke-width="1.2"/></svg>
<svg class="r" style="left:516px;top:173px;" width="9" height="9" viewBox="0 0 9 9"><circle cx="4.5" cy="4.5" r="4" fill="#fff" stroke="#9aa8b8"/><path d="M2 4.5 H7" stroke="#4a5a70" stroke-width="1.2"/></svg>
<svg class="r" style="left:0px;top:0px;" width="1" height="1" viewBox="0 0 1 1"><path d="M768 135 L770 133 L772 135 L774 133 L776 135 L778 133 L780 135 L782 133 L784 135 L786 133 L788 135 L790 133 L792 135 L794 133 L796 135 L798 133 L800 135 L802 133 L804 135 L806 133 L808 135" fill="none" stroke="#e0302a" stroke-width="0.9"/></svg>
<svg class="r" style="left:0px;top:0px;" width="1" height="1" viewBox="0 0 1 1"><path d="M632 254 L634 252 L636 254 L638 252 L640 254 L642 252 L644 254 L646 252 L648 254 L650 252 L652 254 L654 252 L656 254 L658 252 L660 254 L662 252 L664 254" fill="none" stroke="#e0302a" stroke-width="0.9"/></svg>
<svg class="r" style="left:0px;top:0px;" width="1" height="1" viewBox="0 0 1 1"><path d="M552 271 L554 269 L556 271 L558 269 L560 271 L562 269 L564 271 L566 269 L568 271 L570 269 L572 271 L574 269 L576 271 L578 269 L580 271 L582 269 L584 271 L586 269 L588 271 L590 269 L592 271 L594 269 L596 271 L598 269 L600 271 L602 269 L604 271 L606 269 L608 271" fill="none" stroke="#e0302a" stroke-width="0.9"/></svg>
<svg class="r" style="left:0px;top:0px;" width="1" height="1" viewBox="0 0 1 1"><path d="M616 271 L618 269 L620 271 L622 269 L624 271 L626 269 L628 271 L630 269 L632 271 L634 269 L636 271 L638 269 L640 271" fill="none" stroke="#e0302a" stroke-width="0.9"/></svg>
<svg class="r" style="left:0px;top:0px;" width="1" height="1" viewBox="0 0 1 1"><path d="M568 373 L570 371 L572 373 L574 371 L576 373 L578 371 L580 373 L582 371 L584 373 L586 371 L588 373 L590 371 L592 373 L594 371 L596 373 L598 371 L600 373 L602 371 L604 373 L606 371 L608 373 L610 371 L612 373 L614 371 L616 373 L618 371 L620 373 L622 371 L624 373 L626 371 L628 373 L630 371 L632 373" fill="none" stroke="#e0302a" stroke-width="0.9"/></svg>
<svg class="r" style="left:0px;top:0px;" width="1" height="1" viewBox="0 0 1 1"><path d="M840 390 L842 388 L844 390 L846 388 L848 390 L850 388 L852 390 L854 388 L856 390 L858 388 L860 390 L862 388 L864 390 L866 388 L868 390 L870 388 L872 390 L874 388 L876 390 L878 388 L880 390 L882 388 L884 390 L886 388 L888 390 L890 388 L892 390 L894 388 L896 390" fill="none" stroke="#e0302a" stroke-width="0.9"/></svg>
<svg class="r" style="left:0px;top:0px;" width="1" height="1" viewBox="0 0 1 1"><path d="M904 390 L906 388 L908 390 L910 388 L912 390 L914 388 L916 390 L918 388 L920 390 L922 388 L924 390 L926 388 L928 390" fill="none" stroke="#e0302a" stroke-width="0.9"/></svg>
<div class="r" style="left:1418px;top:74px;width:500px;height:224px;border:1px solid #0a8fe6;border-radius:6px;background:#fff;box-sizing:border-box;overflow:hidden">
<div class="r" style="left:0;top:0;width:100%;height:24px;background:linear-gradient(#ffffff,#dde9fb)"></div>
<div class="r" style="left:0;top:24px;width:100%;height:1px;background:#0a8fe6"></div>
</div>
<div class="r" style="left:1917px;top:80px;width:3px;height:212px;background:#f0f5fd;"></div>
<div class="r" style="left:1418px;top:74px;width:97px;height:26px;background:#fff;border:1px solid #0a8fe6;border-bottom:none;border-radius:6px 6px 0 0;box-sizing:border-box"></div>
<div class="t" style="left:1423.00px;top:82.11px;font-size:10.5px;line-height:10.5px;color:#606060;transform:scaleX(0.8707);transform-origin:0 0;">(x)=</div>
<div class="t" style="left:1443.00px;top:81.84px;font-size:12px;line-height:12px;color:#000;transform:scaleX(0.9160);transform-origin:0 0;">Variables</div>
<svg class="r" style="left:1496px;top:83px;" width="11" height="11" viewBox="0 0 11 11"><path d="M0.5 0.5 H3 L5 2.5 L7 0.5 H9.5 V3 L7.5 5 L9.5 7 V9.5 H7 L5 7.5 L3 9.5 H0.5 V7 L2.5 5 L0.5 3 Z" fill="#fff" stroke="#5a5a5a" stroke-width="1"/></svg>
<svg class="r" style="left:1520px;top:82px;" width="15" height="13" viewBox="0 0 15 13"><circle cx="4.5" cy="4.5" r="3.8" fill="#6a8ab8" stroke="#3a5a88"/><circle cx="10.5" cy="8.5" r="3.8" fill="#3a6ab0" stroke="#2a4a80"/></svg>
<div class="t" style="left:1539.00px;top:81.84px;font-size:12px;line-height:12px;color:#000;transform:scaleX(0.9625);transform-origin:0 0;">Breakpoints</div>
<svg class="r" style="left:1611px;top:81px;" width="17" height="15" viewBox="0 0 17 15"><circle cx="4" cy="6" r="3" fill="none" stroke="#666" stroke-width="1.1"/><circle cx="11" cy="6" r="3" fill="none" stroke="#666" stroke-width="1.1"/><path d="M7 6 H8 M14 4 L16 1" stroke="#666"/><text x="6" y="15" font-size="6" fill="#555" font-family="Liberation Sans">x=</text></svg>
<div class="t" style="left:1631.00px;top:81.84px;font-size:12px;line-height:12px;color:#000;transform:scaleX(0.9178);transform-origin:0 0;">Expressions</div>
<div class="t" style="left:1703.00px;top:80.50px;font-size:6.5px;line-height:6.5px;color:#555;">1010</div>
<div class="t" style="left:1703.00px;top:88.50px;font-size:6.5px;line-height:6.5px;color:#555;">0101</div>
<div class="t" style="left:1722.00px;top:81.84px;font-size:12px;line-height:12px;color:#000;transform:scaleX(0.9284);transform-origin:0 0;">Registers</div>
<svg class="r" style="left:1870px;top:82px;" width="10" height="4" viewBox="0 0 10 4"><rect x="0.5" y="0.5" width="9" height="3" fill="#fff" stroke="#5a5a5a"/></svg>
<svg class="r" style="left:1893px;top:82px;" width="10" height="10" viewBox="0 0 10 10"><rect x="0.5" y="0.5" width="9" height="9" fill="#fff" stroke="#5a5a5a"/><line x1="0" y1="2.5" x2="10" y2="2.5" stroke="#5a5a5a"/></svg>
<svg class="r" style="left:1764px;top:104px;" width="17" height="16" viewBox="0 0 17 16"><rect x="3.5" y="6.5" width="13" height="9" fill="#fbe9b8" stroke="#c8a040"/><text x="1" y="11" font-family="Liberation Serif" font-size="12" font-style="italic" fill="#2a4a8a">x</text><path d="M5 14 H13" stroke="#2a4a8a" stroke-dasharray="1.5 1"/></svg>
<div class="r" style="left:1785px;top:103px;width:23px;height:19px;background:#cfe3f8;border:1px solid #a6c8ee;box-sizing:border-box;border-radius:2px"></div>
<svg class="r" style="left:1789px;top:105px;" width="16" height="16" viewBox="0 0 16 16"><path d="M1 7 H6 V4.5 L9.5 8 L6 11.5 V9 H1 Z" fill="#f5c542" stroke="#b8860b" stroke-width="0.6"/><path d="M11 2 V14 M11 5 H15 M11 9 H15 M11 13 H15" stroke="#3a5a88" stroke-width="1.1"/><rect x="13" y="8" width="3" height="3" fill="#d33"/></svg>
<svg class="r" style="left:1812px;top:106px;" width="14" height="14" viewBox="0 0 14 14"><rect x="0.5" y="0.5" width="10" height="10" fill="#f4f4f4" stroke="#c8c8c8"/><rect x="3.5" y="3.5" width="10" height="10" fill="#f4f4f4" stroke="#c8c8c8"/><path d="M5.5 8.5 H11.5" stroke="#aaa" stroke-width="1.3"/></svg>
<div class="r" style="left:1832px;top:104px;width:1px;height:16px;background:#8a8a8a;"></div>
<svg class="r" style="left:1842px;top:104px;" width="16" height="16" viewBox="0 0 16 16"><rect x="0.5" y="3.5" width="13" height="12" fill="#fff" stroke="#9b7a3a"/><rect x="1" y="4" width="12" height="2" fill="#3d7fd0"/><path d="M11 0.5 L12 3 L14.5 3.5 L12 4.5 L11 7 L10 4.5 L7.5 3.5 L10 3 Z" fill="#ffe9a0" stroke="#b88a2a" stroke-width="0.7"/></svg>
<svg class="r" style="left:1866px;top:104px;" width="16" height="16" viewBox="0 0 16 16"><rect x="0.5" y="5.5" width="11" height="9" fill="#eee" stroke="#999"/><path d="M6 10 L14 2" stroke="#aaa" stroke-width="1" stroke-dasharray="2 1"/></svg>
<svg class="r" style="left:1896px;top:104px;" width="6" height="16" viewBox="0 0 6 16"><circle cx="2.8" cy="3" r="1.9" fill="#fff" stroke="#666" stroke-width="1"/><circle cx="2.8" cy="7.8" r="1.9" fill="#fff" stroke="#666" stroke-width="1"/><circle cx="2.8" cy="12.6" r="1.9" fill="#fff" stroke="#666" stroke-width="1"/></svg>
<div class="r" style="left:1421px;top:238px;width:494px;height:5px;background:#ececec;"></div>
<div class="r" style="left:1421px;top:279px;width:494px;height:17px;background:#f0f0f0;"></div>
<div class="r" style="left:1899px;top:243px;width:16px;height:36px;background:#f0f0f0;"></div>
<svg class="r" style="left:1426px;top:283px;" width="6" height="9" viewBox="0 0 6 9"><path d="M6 0 L0 4.5 L6 9 Z" fill="#9a9a9a"/></svg>
<svg class="r" style="left:1887px;top:283px;" width="6" height="9" viewBox="0 0 6 9"><path d="M0 0 L6 4.5 L0 9 Z" fill="#9a9a9a"/></svg>
<svg class="r" style="left:1902px;top:248px;" width="9" height="6" viewBox="0 0 9 6"><path d="M0 6 L4.5 0 L9 6 Z" fill="#9a9a9a"/></svg>
<svg class="r" style="left:1902px;top:266px;" width="9" height="6" viewBox="0 0 9 6"><path d="M0 0 L4.5 6 L9 0 Z" fill="#9a9a9a"/></svg>
<div class="r" style="left:1418px;top:302px;width:500px;height:224px;border:1px solid #0a8fe6;border-radius:6px;background:#fff;box-sizing:border-box;overflow:hidden">
<div class="r" style="left:0;top:0;width:100%;height:24px;background:linear-gradient(#ffffff,#dde9fb)"></div>
<div class="r" style="left:0;top:24px;width:100%;height:1px;background:#0a8fe6"></div>
</div>
<div class="r" style="left:1917px;top:308px;width:3px;height:212px;background:#f0f5fd;"></div>
<div class="r" style="left:1418px;top:302px;width:95px;height:26px;background:#fff;border:1px solid #0a8fe6;border-bottom:none;border-radius:6px 6px 0 0;box-sizing:border-box"></div>
<svg class="r" style="left:1426px;top:308px;" width="10" height="15" viewBox="0 0 10 15"><rect x="0.5" y="0.5" width="9" height="14" rx="4" fill="#7da4e0" stroke="#3a5fa8"/><path d="M3 3 V12" stroke="#dfe9ff" stroke-width="1.5"/></svg>
<div class="t" style="left:1443.00px;top:309.84px;font-size:12px;line-height:12px;color:#000;transform:scaleX(1.0144);transform-origin:0 0;">Memory</div>
<svg class="r" style="left:1494px;top:310px;" width="11" height="11" viewBox="0 0 11 11"><path d="M0.5 0.5 H3 L5 2.5 L7 0.5 H9.5 V3 L7.5 5 L9.5 7 V9.5 H7 L5 7.5 L3 9.5 H0.5 V7 L2.5 5 L0.5 3 Z" fill="#fff" stroke="#5a5a5a" stroke-width="1"/></svg>
<div class="t" style="left:1618.00px;top:311.07px;font-size:7px;line-height:7px;color:#666;">1010</div>
<div class="t" style="left:1641.00px;top:311.07px;font-size:7px;line-height:7px;color:#666;">1010</div>
<svg class="r" style="left:1666px;top:307px;" width="16" height="16" viewBox="0 0 16 16"><path d="M2.5 1.5 H10 L13.5 5 V15.5 H2.5 Z" fill="#fff" stroke="#b8903a"/><path d="M10 1 L11 4 L14 3" fill="none" stroke="#c8962a"/></svg>
<svg class="r" style="left:1689px;top:307px;" width="17" height="16" viewBox="0 0 17 16"><rect x="0.5" y="5.5" width="14" height="10" fill="#fff" stroke="#3a6aa8"/><rect x="1" y="6" width="13" height="2" fill="#3d7fd0"/><path d="M9 9 L15 3" stroke="#2a8a2a" stroke-width="2"/><circle cx="14" cy="3" r="2.5" fill="#3aa03a"/></svg>
<div class="r" style="left:1709px;top:306px;width:1px;height:16px;background:#8a8a8a;"></div>
<div class="r" style="left:1715px;top:304px;width:23px;height:21px;background:#cfe3f8;border:1px solid #a6c8ee;box-sizing:border-box;border-radius:2px"></div>
<svg class="r" style="left:1719px;top:307px;" width="16" height="16" viewBox="0 0 16 16"><path d="M1 7 H6 V4.5 L9.5 8 L6 11.5 V9 H1 Z" fill="#f5c542" stroke="#b8860b" stroke-width="0.6"/><path d="M11 2 V14 M11 5 H15 M11 9 H15 M11 13 H15" stroke="#3a5a88" stroke-width="1.1"/><rect x="13" y="8" width="3" height="3" fill="#d33"/></svg>
<div class="r" style="left:1741px;top:306px;width:1px;height:16px;background:#8a8a8a;"></div>
<svg class="r" style="left:1750px;top:307px;" width="16" height="16" viewBox="0 0 16 16"><rect x="1.5" y="1.5" width="13" height="13" fill="#fff" stroke="#777"/><circle cx="5" cy="5" r="1.5" fill="#3a3"/><circle cx="5" cy="11" r="1.5" fill="#3a3"/><path d="M9 4 H12 M9 7 H12 M9 10 H12" stroke="#c33"/></svg>
<div class="r" style="left:1769px;top:304px;width:23px;height:21px;background:#cfe3f8;border:1px solid #a6c8ee;box-sizing:border-box;border-radius:2px"></div>
<svg class="r" style="left:1772px;top:307px;" width="17" height="16" viewBox="0 0 17 16"><path d="M1 5 L6 1 V3.5 H14 V6.5 H6 V9 Z" fill="#fff3d0" stroke="#c8902a" stroke-width="1.2"/><path d="M16 11 L11 7 V9.5 H3 V12.5 H11 V15 Z" fill="#fff3d0" stroke="#c8902a" stroke-width="1.2"/></svg>
<div class="r" style="left:1795px;top:306px;width:1px;height:16px;background:#8a8a8a;"></div>
<svg class="r" style="left:1805px;top:307px;" width="15" height="16" viewBox="0 0 15 16"><rect x="0.5" y="0.5" width="5" height="5" fill="#eee" stroke="#bbb"/><rect x="7.5" y="0.5" width="5" height="5" fill="#eee" stroke="#bbb"/><rect x="0.5" y="7.5" width="5" height="5" fill="#eee" stroke="#bbb"/><rect x="8" y="7" width="6" height="8.5" rx="2" fill="#ccc" stroke="#aaa"/></svg>
<svg class="r" style="left:1827px;top:314px;" width="8" height="5" viewBox="0 0 8 5"><path d="M0 0 L8 0 L4 4.5 Z" fill="#555"/></svg>
<svg class="r" style="left:1850px;top:307px;" width="6" height="16" viewBox="0 0 6 16"><circle cx="2.8" cy="3" r="1.9" fill="#fff" stroke="#666" stroke-width="1"/><circle cx="2.8" cy="7.8" r="1.9" fill="#fff" stroke="#666" stroke-width="1"/><circle cx="2.8" cy="12.6" r="1.9" fill="#fff" stroke="#666" stroke-width="1"/></svg>
<svg class="r" style="left:1870px;top:310px;" width="10" height="4" viewBox="0 0 10 4"><rect x="0.5" y="0.5" width="9" height="3" fill="#fff" stroke="#5a5a5a"/></svg>
<svg class="r" style="left:1893px;top:310px;" width="10" height="10" viewBox="0 0 10 10"><rect x="0.5" y="0.5" width="9" height="9" fill="#fff" stroke="#5a5a5a"/><line x1="0" y1="2.5" x2="10" y2="2.5" stroke="#5a5a5a"/></svg>
<div class="t" style="left:1422.00px;top:330.84px;font-size:12px;line-height:12px;color:#000;transform:scaleX(1.0217);transform-origin:0 0;">Monitors</div>
<svg class="r" style="left:1488px;top:334px;" width="14" height="14" viewBox="0 0 14 14"><path d="M7 1 V13 M1 7 H13" stroke="#c8c8c8" stroke-width="4"/><path d="M7 2 V12 M2 7 H12" stroke="#e8e8e8" stroke-width="1.5"/></svg>
<svg class="r" style="left:1512px;top:333px;" width="14" height="14" viewBox="0 0 14 14"><path d="M2 2 L12 12 M12 2 L2 12" stroke="#a8a8a8" stroke-width="3.5"/></svg>
<svg class="r" style="left:1535px;top:333px;" width="15" height="15" viewBox="0 0 15 15"><path d="M1 1 L8 8 M8 1 L1 8" stroke="#d0d0d0" stroke-width="2.5"/><path d="M4 4 L14 14 M14 4 L4 14" stroke="#a8a8a8" stroke-width="3"/></svg>
<div class="r" style="left:1421px;top:353px;width:133px;height:1px;background:#a0a0a0;"></div>
<div class="r" style="left:1557px;top:349px;width:358px;height:1px;background:#a0a0a0;"></div>
<div class="r" style="left:485px;top:530px;width:728px;height:560px;border:1px solid #0a8fe6;border-radius:6px;background:#fff;box-sizing:border-box;overflow:hidden">
<div class="r" style="left:0;top:0;width:100%;height:24px;background:linear-gradient(#ffffff,#dde9fb)"></div>
<div class="r" style="left:0;top:24px;width:100%;height:1px;background:#0a8fe6"></div>
</div>
<div class="r" style="left:485px;top:530px;width:94px;height:26px;background:#fff;border:1px solid #0a8fe6;border-bottom:none;border-radius:6px 6px 0 0;box-sizing:border-box"></div>
<svg class="r" style="left:492px;top:537px;" width="16" height="15" viewBox="0 0 16 15"><rect x="1" y="1" width="14" height="10" rx="1.5" fill="#fff" stroke="#2e6bb8" stroke-width="2"/><path d="M4 4.5 H11 M4 7 H9" stroke="#2e6bb8" stroke-width="1.2"/><rect x="4" y="12" width="8" height="2" fill="#2e6bb8"/></svg>
<div class="t" style="left:509.50px;top:538.84px;font-size:12px;line-height:12px;color:#000;transform:scaleX(0.9773);transform-origin:0 0;">Console</div>
<svg class="r" style="left:561px;top:539px;" width="11" height="11" viewBox="0 0 11 11"><path d="M0.5 0.5 H3 L5 2.5 L7 0.5 H9.5 V3 L7.5 5 L9.5 7 V9.5 H7 L5 7.5 L3 9.5 H0.5 V7 L2.5 5 L0.5 3 Z" fill="#fff" stroke="#5a5a5a" stroke-width="1"/></svg>
<svg class="r" style="left:585px;top:537px;" width="16" height="15" viewBox="0 0 16 15"><rect x="1" y="1" width="14" height="10" rx="1.5" fill="#fff" stroke="#2e6bb8" stroke-width="2"/><path d="M4 4.5 H11 M4 7 H9" stroke="#2e6bb8" stroke-width="1.2"/><rect x="4" y="12" width="8" height="2" fill="#2e6bb8"/></svg>
<div class="t" style="left:603.00px;top:538.84px;font-size:12px;line-height:12px;color:#000;transform:scaleX(0.9226);transform-origin:0 0;">Vitis Serial Ter...</div>
<svg class="r" style="left:700px;top:536px;" width="15" height="15" viewBox="0 0 15 15"><circle cx="7.5" cy="7.5" r="6.5" fill="#5a8ad0" stroke="#3a5a98"/><path d="M6 4 L11 7.5 L6 11 Z" fill="#fff"/></svg>
<div class="t" style="left:719.00px;top:538.84px;font-size:12px;line-height:12px;color:#000;transform:scaleX(0.9407);transform-origin:0 0;">Executables</div>
<svg class="r" style="left:794px;top:536px;" width="13" height="16" viewBox="0 0 13 16"><path d="M1 1.5 H12 V15 H1 Z" fill="#fff" stroke="#8a7a50"/><path d="M2 1 H11" stroke="#555" stroke-dasharray="1 1" stroke-width="2"/><text x="4" y="13" font-size="10" font-family="Liberation Sans" font-weight="bold" fill="#2c4f8e">J</text></svg>
<div class="t" style="left:811.00px;top:538.84px;font-size:12px;line-height:12px;color:#000;transform:scaleX(0.9484);transform-origin:0 0;">Debug Shell</div>
<svg class="r" style="left:885px;top:536px;" width="13" height="16" viewBox="0 0 13 16"><rect x="0.5" y="0.5" width="12" height="15" fill="#fff" stroke="#2a4a88"/><path d="M3 3.5 H10 M3 6 H10 M3 8.5 H10 M3 11 H10" stroke="#c33" stroke-width="1"/><path d="M5 3.5 H10 M5 8.5 H10" stroke="#34a" stroke-width="1"/></svg>
<div class="t" style="left:903.00px;top:538.84px;font-size:12px;line-height:12px;color:#000;transform:scaleX(0.9617);transform-origin:0 0;">Vitis Log</div>
<svg class="r" style="left:958px;top:536px;" width="15" height="16" viewBox="0 0 15 16"><rect x="0.5" y="0.5" width="13" height="15" fill="#f3e9d8" stroke="#9a8a70"/><circle cx="5" cy="5" r="3" fill="#d33"/><path d="M3 15 L5 10 L7 15 Z" fill="#f4a020"/><path d="M9 2 V14" stroke="#888"/></svg>
<div class="t" style="left:977.00px;top:538.84px;font-size:12px;line-height:12px;color:#000;transform:scaleX(0.9877);transform-origin:0 0;">Problems</div>
<svg class="r" style="left:1040px;top:536px;" width="16" height="16" viewBox="0 0 16 16"><rect x="0.5" y="0.5" width="13" height="10" fill="#dbe8f7" stroke="#2a4a88"/><rect x="3" y="11" width="8" height="2" fill="#2a4a88"/><circle cx="11" cy="11" r="4" fill="#5ab05a" stroke="#2a7a2a"/></svg>
<div class="t" style="left:1058.00px;top:538.84px;font-size:12px;line-height:12px;color:#000;transform:scaleX(0.9659);transform-origin:0 0;">Debugger Con...</div>
<svg class="r" style="left:1165px;top:538px;" width="10" height="4" viewBox="0 0 10 4"><rect x="0.5" y="0.5" width="9" height="3" fill="#fff" stroke="#5a5a5a"/></svg>
<svg class="r" style="left:1188px;top:537px;" width="10" height="10" viewBox="0 0 10 10"><rect x="0.5" y="0.5" width="9" height="9" fill="#fff" stroke="#5a5a5a"/><line x1="0" y1="2.5" x2="10" y2="2.5" stroke="#5a5a5a"/></svg>
<div class="r" style="left:1029px;top:558px;width:176px;height:22px;background:#dde9fb;"></div>
<svg class="r" style="left:1033px;top:561px;" width="16" height="16" viewBox="0 0 16 16"><path d="M0.5 0.5 H9 L12.5 4 V15.5 H0.5 Z" fill="#fff" stroke="#9a8a60"/><path d="M2 5 H10 M2 8 H10 M2 11 H8" stroke="#5a7ab8"/><path d="M10 11 L15 16 M15 11 L10 16" stroke="#777" stroke-width="1.8"/></svg>
<svg class="r" style="left:1056px;top:561px;" width="16" height="16" viewBox="0 0 16 16"><rect x="7.5" y="0.5" width="8" height="15" fill="#fff" stroke="#888"/><rect x="0.5" y="8" width="8" height="7" rx="1" fill="#f2c14e" stroke="#a8801a"/><path d="M2.5 8 V5 Q4.5 2 6.5 5 V8" fill="none" stroke="#888" stroke-width="1.2"/><rect x="11" y="3" width="2" height="2" fill="#777"/><rect x="11" y="10" width="2" height="2" fill="#777"/></svg>
<svg class="r" style="left:1079px;top:561px;" width="16" height="16" viewBox="0 0 16 16"><path d="M0.5 0.5 H9 L12.5 4 V15.5 H0.5 Z" fill="#fff" stroke="#c8b890"/><path d="M2 5 H10 M2 8 H10" stroke="#aab8d0"/><path d="M14 5 V11 H6 L8 9 M6 11 L8 13" fill="none" stroke="#e0b040" stroke-width="1.8"/></svg>
<div class="r" style="left:1100px;top:562px;width:1px;height:16px;background:#8a8a8a;"></div>
<svg class="r" style="left:1111px;top:561px;" width="16" height="16" viewBox="0 0 16 16"><rect x="0.5" y="5.5" width="14" height="10" fill="#fff" stroke="#3a6aa8"/><rect x="1" y="6" width="13" height="2" fill="#3d7fd0"/><path d="M9 9 L15 3" stroke="#2a8a2a" stroke-width="2"/><circle cx="14" cy="3" r="2.5" fill="#3aa03a"/></svg>
<svg class="r" style="left:1135px;top:562px;" width="16" height="15" viewBox="0 0 16 15"><rect x="1" y="1" width="14" height="10" rx="1.5" fill="#fff" stroke="#2e6bb8" stroke-width="2"/><path d="M4 4.5 H11 M4 7 H9" stroke="#2e6bb8" stroke-width="1.2"/><rect x="4" y="12" width="8" height="2" fill="#2e6bb8"/></svg>
<svg class="r" style="left:1155px;top:567px;" width="8" height="5" viewBox="0 0 8 5"><path d="M0 0 L8 0 L4 4.5 Z" fill="#222"/></svg>
<svg class="r" style="left:1172px;top:561px;" width="16" height="16" viewBox="0 0 16 16"><rect x="0.5" y="3.5" width="13" height="12" fill="#fff" stroke="#9b7a3a"/><rect x="1" y="4" width="12" height="2" fill="#3d7fd0"/><path d="M11 0.5 L12 3 L14.5 3.5 L12 4.5 L11 7 L10 4.5 L7.5 3.5 L10 3 Z" fill="#ffe9a0" stroke="#b88a2a" stroke-width="0.7"/></svg>
<svg class="r" style="left:1193px;top:567px;" width="8" height="5" viewBox="0 0 8 5"><path d="M0 0 L8 0 L4 4.5 Z" fill="#222"/></svg>
<div class="t" style="left:488.00px;top:581.84px;font-size:12px;line-height:12px;color:#000;transform:scaleX(0.9920);transform-origin:0 0;">Platform Tcl Console</div>
<div class="r" style="left:488px;top:595px;width:722px;height:1px;background:#a0a0a0;"></div>
<div class="r" style="left:1194px;top:597px;width:16px;height:440px;background:#f0f0f0;"></div>
<svg class="r" style="left:1198px;top:603px;" width="9" height="6" viewBox="0 0 9 6"><path d="M0 6 L4.5 0 L9 6 Z" fill="#9a9a9a"/></svg>
<svg class="r" style="left:1198px;top:1020px;" width="9" height="6" viewBox="0 0 9 6"><path d="M0 0 L4.5 6 L9 0 Z" fill="#9a9a9a"/></svg>
<div class="t" style="left:490.00px;top:599.78px;font-size:13.333px;line-height:13.333px;color:#1a00f0;font-family:'Liberation Mono', monospace;">platform create -name {design_1_wrapper_1} -hw {C:\383\ublaze1\design_1_wrapper.xsa} -ou</div>
<div class="t" style="left:490.00px;top:616.78px;font-size:13.333px;line-height:13.333px;color:#1a00f0;font-family:'Liberation Mono', monospace;">domain create -name {standalone_microblaze_0} -display-name {standalone_microblaze_0} -o</div>
<div class="t" style="left:490.00px;top:633.78px;font-size:13.333px;line-height:13.333px;color:#1a00f0;font-family:'Liberation Mono', monospace;">platform write</div>
<div class="t" style="left:490.00px;top:650.78px;font-size:13.333px;line-height:13.333px;color:#1a00f0;font-family:'Liberation Mono', monospace;">platform active {design_1_wrapper_1}</div>
<div class="t" style="left:490.00px;top:667.78px;font-size:13.333px;line-height:13.333px;color:#1a00f0;font-family:'Liberation Mono', monospace;">platform generate -quick</div>
<div class="r" style="left:1217px;top:530px;width:701px;height:560px;border:1px solid #0a8fe6;border-radius:6px;background:#fff;box-sizing:border-box;overflow:hidden">
<div class="r" style="left:0;top:0;width:100%;height:24px;background:linear-gradient(#ffffff,#dde9fb)"></div>
<div class="r" style="left:0;top:24px;width:100%;height:1px;background:#0a8fe6"></div>
</div>
<div class="r" style="left:1917px;top:536px;width:3px;height:500px;background:#f0f5fd;"></div>
<div class="r" style="left:1451px;top:530px;width:95px;height:26px;background:#fff;border:1px solid #0a8fe6;border-bottom:none;border-radius:6px 6px 0 0;box-sizing:border-box"></div>
<svg class="r" style="left:1222px;top:536px;" width="16" height="16" viewBox="0 0 16 16"><rect x="0.5" y="0.5" width="15" height="15" rx="2" fill="#2a2a2a" stroke="#2a7be0" stroke-width="1.5"/><rect x="1" y="1" width="14" height="2.5" fill="#2a7be0"/><path d="M3.5 6.5 L6 8.5 L3.5 10.5" fill="none" stroke="#fff" stroke-width="1.2"/></svg>
<div class="t" style="left:1242.00px;top:538.84px;font-size:12px;line-height:12px;color:#000;transform:scaleX(0.9100);transform-origin:0 0;">XSCT Console</div>
<svg class="r" style="left:1325px;top:536px;" width="16" height="16" viewBox="0 0 16 16"><rect x="0.5" y="0.5" width="15" height="15" rx="2" fill="#2a2a2a" stroke="#2a7be0" stroke-width="1.5"/><rect x="1" y="1" width="14" height="2.5" fill="#2a7be0"/><path d="M3.5 6.5 L6 8.5 L3.5 10.5" fill="none" stroke="#fff" stroke-width="1.2"/></svg>
<div class="t" style="left:1345.00px;top:538.84px;font-size:12px;line-height:12px;color:#000;transform:scaleX(0.9826);transform-origin:0 0;">Emulation Console</div>
<svg class="r" style="left:1456px;top:536px;" width="16" height="16" viewBox="0 0 16 16"><rect x="4.5" y="0.5" width="11" height="9" fill="#fff" stroke="#333"/><rect x="6" y="2" width="8" height="6" fill="#1a5fd8"/><path d="M1 15 L6 9 L9 12 L4 16 Z" fill="#aaa" stroke="#666" stroke-width="0.8"/></svg>
<div class="t" style="left:1475.00px;top:538.84px;font-size:12px;line-height:12px;color:#000;transform:scaleX(0.9697);transform-origin:0 0;">Terminal</div>
<svg class="r" style="left:1527px;top:539px;" width="11" height="11" viewBox="0 0 11 11"><path d="M0.5 0.5 H3 L5 2.5 L7 0.5 H9.5 V3 L7.5 5 L9.5 7 V9.5 H7 L5 7.5 L3 9.5 H0.5 V7 L2.5 5 L0.5 3 Z" fill="#fff" stroke="#5a5a5a" stroke-width="1"/></svg>
<svg class="r" style="left:1669px;top:537px;" width="16" height="15" viewBox="0 0 16 15"><rect x="1" y="1" width="14" height="10" rx="1.5" fill="#fff" stroke="#2e6bb8" stroke-width="2"/><path d="M4 4.5 H11 M4 7 H9" stroke="#2e6bb8" stroke-width="1.2"/><rect x="4" y="12" width="8" height="2" fill="#2e6bb8"/></svg>
<svg class="r" style="left:1691px;top:537px;" width="15" height="15" viewBox="0 0 15 15"><path d="M2 12 L5 4 L9 10 L12 2" fill="none" stroke="#999" stroke-width="1.2"/><circle cx="2.5" cy="13" r="2" fill="#aaa"/><circle cx="12.5" cy="2.5" r="2" fill="#aaa"/></svg>
<div class="r" style="left:1712px;top:537px;width:1px;height:16px;background:#8a8a8a;"></div>
<svg class="r" style="left:1721px;top:536px;" width="16" height="16" viewBox="0 0 16 16"><path d="M1 1 H5 M3 1 V15 M1 15 H5" stroke="#3a6aa8"/><rect x="6.5" y="4.5" width="9" height="11" fill="#fff" stroke="#888"/><path d="M8 7 H14 M8 9.5 H14 M8 12 H14" stroke="#5a7ab8"/></svg>
<svg class="r" style="left:1745px;top:536px;" width="16" height="16" viewBox="0 0 16 16"><path d="M0.5 0.5 H9 L12.5 4 V15.5 H0.5 Z" fill="#fff" stroke="#9a8a60"/><path d="M2 5 H10 M2 8 H10 M2 11 H8" stroke="#5a7ab8"/><path d="M10 11 L15 16 M15 11 L10 16" stroke="#333" stroke-width="1.8"/></svg>
<svg class="r" style="left:1767px;top:536px;" width="16" height="16" viewBox="0 0 16 16"><rect x="7.5" y="0.5" width="8" height="15" fill="#fff" stroke="#888"/><rect x="0.5" y="8" width="8" height="7" rx="1" fill="#f2c14e" stroke="#a8801a"/><path d="M2.5 8 V5 Q4.5 2 6.5 5 V8" fill="none" stroke="#888" stroke-width="1.2"/><rect x="11" y="3" width="2" height="2" fill="#777"/><rect x="11" y="10" width="2" height="2" fill="#777"/></svg>
<div class="r" style="left:1790px;top:537px;width:1px;height:16px;background:#8a8a8a;"></div>
<svg class="r" style="left:1798px;top:536px;" width="16" height="16" viewBox="0 0 16 16"><rect x="0.5" y="0.5" width="10" height="12" fill="#f4f4f4" stroke="#ccc"/><rect x="4.5" y="3.5" width="10" height="12" fill="#f4f4f4" stroke="#ccc"/></svg>
<svg class="r" style="left:1822px;top:536px;" width="16" height="16" viewBox="0 0 16 16"><rect x="0.5" y="2.5" width="11" height="13" fill="#f2c060" stroke="#a8801a"/><rect x="3" y="0.5" width="6" height="3" fill="#ccc" stroke="#777"/><rect x="6.5" y="6.5" width="9" height="9" fill="#fff" stroke="#888"/></svg>
<svg class="r" style="left:1845px;top:536px;" width="16" height="16" viewBox="0 0 16 16"><rect x="4.5" y="0.5" width="11" height="9" fill="#fff" stroke="#333"/><rect x="6" y="2" width="8" height="6" fill="#1a5fd8"/><path d="M1 15 L6 9 L9 12 L4 16 Z" fill="#aaa" stroke="#666" stroke-width="0.8"/><path d="M13 0 L14 2 L16 2.5 L14 3 L13 5 L12 3 L10 2.5 L12 2 Z" fill="#ffd040"/></svg>
<svg class="r" style="left:1870px;top:538px;" width="10" height="4" viewBox="0 0 10 4"><rect x="0.5" y="0.5" width="9" height="3" fill="#fff" stroke="#5a5a5a"/></svg>
<svg class="r" style="left:1893px;top:537px;" width="10" height="10" viewBox="0 0 10 10"><rect x="0.5" y="0.5" width="9" height="9" fill="#fff" stroke="#5a5a5a"/><line x1="0" y1="2.5" x2="10" y2="2.5" stroke="#5a5a5a"/></svg>
<svg class="r" style="left:1220px;top:558px;" width="700" height="480" viewBox="0 0 700 480"><path d="M0.5 480 V7 Q0.5 0.5 7 0.5 H688 Q694.5 0.5 694.5 7 V480" fill="#fff" stroke="#a0a0a0"/><path d="M211 0.5 Q218 1 224 6 L233 14 Q239 20.5 246 20.5 H694" fill="none" stroke="#a0a0a0"/></svg>
<svg class="r" style="left:1225px;top:561px;" width="16" height="15" viewBox="0 0 16 15"><rect x="1" y="1" width="14" height="10" rx="1.5" fill="#fff" stroke="#2e6bb8" stroke-width="2"/><path d="M4 4.5 H11 M4 7 H9" stroke="#2e6bb8" stroke-width="1.2"/><rect x="4" y="12" width="8" height="2" fill="#2e6bb8"/></svg>
<div class="t" style="left:1244.00px;top:563.84px;font-size:12px;line-height:12px;color:#000;transform:scaleX(0.9641);transform-origin:0 0;">Serial COM7 (2/28/25, 12:21 AM)</div>
<svg class="r" style="left:1422px;top:563px;" width="11" height="11" viewBox="0 0 11 11"><path d="M0.5 0.5 H3 L5 2.5 L7 0.5 H9.5 V3 L7.5 5 L9.5 7 V9.5 H7 L5 7.5 L3 9.5 H0.5 V7 L2.5 5 L0.5 3 Z" fill="#fff" stroke="#5a5a5a" stroke-width="1"/></svg>
<div class="r" style="left:1898px;top:579px;width:16px;height:460px;background:#f0f0f0;"></div>
<svg class="r" style="left:1902px;top:585px;" width="9" height="6" viewBox="0 0 9 6"><path d="M0 6 L4.5 0 L9 6 Z" fill="#9a9a9a"/></svg>
<div class="r" style="left:0px;top:1032px;width:1920px;height:48px;background:#ebf0f8;border-top:1px solid #b4b8be;box-sizing:border-box"></div>
<svg class="r" style="left:17px;top:1046px;" width="22" height="22" viewBox="0 0 22 22"><rect x="1" y="1" width="20" height="20" rx="2" fill="#fff" stroke="#1a5fb4" stroke-width="2"/><rect x="3" y="3" width="7" height="16" fill="#1a6fd0"/><rect x="12" y="3" width="7" height="8" fill="#4aa0f0"/><rect x="12" y="12" width="7" height="7" fill="#1a6fd0"/></svg>
<svg class="r" style="left:399px;top:1045px;" width="22" height="22" viewBox="0 0 22 22"><rect x="0" y="0" width="10.5" height="10.5" fill="#1a9ff0"/><rect x="11.5" y="0" width="10.5" height="10.5" fill="#1a9ff0"/><rect x="0" y="11.5" width="10.5" height="10.5" fill="#1a8ae0"/><rect x="11.5" y="11.5" width="10.5" height="10.5" fill="#1a8ae0"/></svg>
<svg class="r" style="left:444px;top:1045px;" width="22" height="22" viewBox="0 0 22 22"><circle cx="9" cy="9" r="7" fill="none" stroke="#222" stroke-width="2.2"/><path d="M14 14 L20 20" stroke="#222" stroke-width="2.4"/></svg>
<svg class="r" style="left:486px;top:1045px;" width="22" height="22" viewBox="0 0 22 22"><rect x="6" y="1" width="15" height="14" rx="2" fill="#f4f4f4" stroke="#ddd"/><rect x="1" y="7" width="15" height="14" rx="1.5" fill="#222"/><rect x="6" y="7" width="10" height="8" fill="#bbb"/></svg>
<svg class="r" style="left:531px;top:1044px;" width="24" height="24" viewBox="0 0 24 24"><circle cx="12" cy="12" r="11" fill="#6a5fd8"/><path d="M2 22 L5 16" stroke="#6a5fd8" stroke-width="4"/><rect x="6" y="8" width="9" height="8" rx="2" fill="#fff"/><path d="M15 10 L19 8 V16 L15 14 Z" fill="#fff"/></svg>
<svg class="r" style="left:574px;top:1044px;" width="24" height="22" viewBox="0 0 24 22"><path d="M1 3 H9 L11 5 H23 V21 H1 Z" fill="#f0b72c"/><path d="M1 7 H23 V21 H1 Z" fill="#fcd34d"/><rect x="6" y="14" width="12" height="5" rx="1" fill="#1a6fd0"/></svg>
<svg class="r" style="left:619px;top:1044px;" width="23" height="23" viewBox="0 0 23 23"><path d="M7 5 V2 Q7 0 9 0 H14 Q16 0 16 2 V5" fill="none" stroke="#2a9ff0" stroke-width="1.8"/><rect x="1" y="5" width="21" height="17" rx="2" fill="#1c4f8c"/><rect x="7" y="9" width="4" height="4" fill="#f25022"/><rect x="12" y="9" width="4" height="4" fill="#7fba00"/><rect x="7" y="14" width="4" height="4" fill="#00a4ef"/><rect x="12" y="14" width="4" height="4" fill="#ffb900"/></svg>
<svg class="r" style="left:663px;top:1044px;" width="24" height="24" viewBox="0 0 24 24"><circle cx="12" cy="12" r="11.5" fill="#ea4335"/><path d="M12 12 L22.5 8 A11.5 11.5 0 0 1 12 23.5 Z" fill="#fbbc05"/><path d="M12 12 L12 23.5 A11.5 11.5 0 0 1 1.5 7 Z" fill="#34a853"/><circle cx="12" cy="12" r="5.5" fill="#fff"/><circle cx="12" cy="12" r="4.3" fill="#4285f4"/></svg>
<svg class="r" style="left:707px;top:1045px;" width="22" height="22" viewBox="0 0 22 22"><circle cx="11" cy="11" r="10.5" fill="#5b2fb5" stroke="#8a8a8a" stroke-width="0.6"/><text x="11" y="16.5" font-family="Liberation Sans" font-size="15" font-weight="bold" fill="#fff" text-anchor="middle">S</text></svg>
<svg class="r" style="left:750px;top:1045px;" width="24" height="22" viewBox="0 0 24 22"><circle cx="12" cy="11" r="11" fill="#fff"/><ellipse cx="12" cy="10" rx="7" ry="5" fill="#1a73e8"/><path d="M11 14 L12 18 L14 14 Z" fill="#1a73e8"/></svg>
<svg class="r" style="left:795px;top:1044px;" width="24" height="24" viewBox="0 0 24 24"><circle cx="12" cy="12" r="11.6" fill="#1f9be0"/><path d="M14 0.6 A11.6 11.6 0 0 1 23.6 12 Q23.4 16.5 18.5 16.5 Q15.5 16.5 15.5 13 Q15.5 9.5 13 7.5 Q11 5 14 0.6 Z" fill="#52cc60"/><path d="M1 12.5 Q4.5 8.5 10 8.5 Q6.5 10 6.5 14 Q6.5 20.5 14.5 21.2 Q18 21.4 20.5 19.5 Q17 23.6 12 23.6 Q1.5 23.4 1 12.5 Z" fill="#0c56a6"/><path d="M7 14 Q7.5 10.5 11 10.5 Q15 10.8 15 14 Q15 17.5 11.5 17.8 Q7.5 17.5 7 14 Z" fill="#ffffff"/></svg>
<svg class="r" style="left:838px;top:1040px;" width="28" height="28" viewBox="0 0 28 28"><rect x="1" y="9" width="14" height="14" rx="2" fill="#4b53bc"/><circle cx="19" cy="13" r="7" fill="#7b83eb"/><rect x="13" y="12" width="13" height="12" rx="4" fill="#5b5fc7"/><text x="8" y="20" font-family="Liberation Sans" font-size="10" font-weight="bold" fill="#fff" text-anchor="middle">T</text><circle cx="20.5" cy="7.5" r="7.5" fill="#c4262e"/><text x="20.5" y="11.5" font-family="Liberation Sans" font-size="11" fill="#fff" text-anchor="middle">1</text></svg>
<svg class="r" style="left:882px;top:1045px;" width="24" height="22" viewBox="0 0 24 22"><path d="M5 1 H23 L19 21 H1 Z" fill="#2f6fe0"/><path d="M6 6 L11 10 L6 14" fill="none" stroke="#fff" stroke-width="1.8"/><path d="M11 16 H16" stroke="#fff" stroke-width="1.8"/></svg>
<svg class="r" style="left:926px;top:1044px;" width="24" height="24" viewBox="0 0 24 24"><path d="M17 1 L23 4 V20 L17 23 L7 13 L3 16 L1 15 V9 L3 8 L7 11 Z M17 7 L11 12 L17 17 Z" fill="#1f8ad2"/><path d="M17 1 L23 4 V20 L17 23 Z" fill="#0f6fb8"/></svg>
<svg class="r" style="left:970px;top:1044px;" width="24" height="24" viewBox="0 0 24 24"><rect x="2" y="3" width="20" height="20" rx="1" fill="#7ed0f0" stroke="#2a8ab8"/><path d="M6 0 V5 M10 0 V5 M14 0 V5 M18 0 V5" stroke="#2a6a98" stroke-width="1.5"/><path d="M5 9 H19 M5 12 H19 M5 15 H19 M5 18 H19" stroke="#2a6a98"/><rect x="2" y="21" width="20" height="2" fill="#b85a20"/></svg>
<svg class="r" style="left:1014px;top:1044px;" width="24" height="24" viewBox="0 0 24 24"><rect x="0" y="0" width="24" height="24" rx="3" fill="#134a8a"/><rect x="2" y="2" width="20" height="20" rx="2" fill="#3db2f2"/><path d="M5 20 L12 5 L19 20 M9 13 H20" stroke="#134a8a" stroke-width="1.5" fill="none"/></svg>
<svg class="r" style="left:1060px;top:1044px;" width="20" height="24" viewBox="0 0 20 24"><rect x="0.5" y="0.5" width="19" height="23" rx="2" fill="#5a6a7a"/><rect x="3" y="3" width="14" height="4" fill="#8ed0f8"/><rect x="3" y="9" width="4" height="3" fill="#ddd"/><rect x="8" y="9" width="4" height="3" fill="#ddd"/><rect x="13" y="9" width="4" height="3" fill="#ddd"/><rect x="3" y="14" width="4" height="3" fill="#ddd"/><rect x="8" y="14" width="4" height="3" fill="#ddd"/><rect x="13" y="14" width="4" height="7" fill="#1a5fb4"/><rect x="3" y="19" width="4" height="2" fill="#ddd"/><rect x="8" y="19" width="4" height="2" fill="#ddd"/></svg>
<svg class="r" style="left:1102px;top:1044px;" width="25" height="24" viewBox="0 0 25 24"><rect x="7" y="1" width="18" height="22" rx="1.5" fill="#2b7cd3"/><path d="M7 6 H25 M7 11 H25 M7 16 H25" stroke="#41a5ee" stroke-width="2"/><rect x="0" y="5" width="13" height="13" rx="1" fill="#185abd"/><text x="6.5" y="15.5" font-family="Liberation Sans" font-size="10" font-weight="bold" fill="#fff" text-anchor="middle">W</text></svg>
<div class="r" style="left:1140px;top:1036px;width:39px;height:39px;background:#fbe3e6;border-radius:4px"></div>
<svg class="r" style="left:1147px;top:1045px;" width="24" height="24" viewBox="0 0 24 24"><circle cx="12" cy="12" r="11.5" fill="#fff" stroke="#ddd"/><path d="M10 5 V10 M14 14 V19 M5 14 H10 M14 10 H19" stroke="#e01e5a" stroke-width="2.5" stroke-linecap="round"/><path d="M10 14 V19" stroke="#ecb22e" stroke-width="2.5" stroke-linecap="round"/><path d="M14 5 V10" stroke="#2eb67d" stroke-width="2.5" stroke-linecap="round"/><path d="M5 10 H10" stroke="#36c5f0" stroke-width="2.5" stroke-linecap="round"/></svg>
<svg class="r" style="left:1192px;top:1045px;" width="22" height="22" viewBox="0 0 22 22"><circle cx="11" cy="11" r="10.3" fill="#2a2a2e"/><g fill="none" stroke="#d8d8d8" stroke-width="1.3"><path d="M6 4 Q5 8 9 9.5"/><path d="M18 9 Q14 8 12.5 11.5"/><path d="M9.5 18.5 Q12 15 10 12.5"/></g><circle cx="10.8" cy="7.5" r="3" fill="#3a3a3e"/><circle cx="14.5" cy="13" r="3" fill="#3a3a3e"/><circle cx="7.5" cy="13.5" r="3" fill="#3a3a3e"/></svg>
<svg class="r" style="left:1235px;top:1044px;" width="24" height="24" viewBox="0 0 24 24"><path d="M12 1 Q22 1 22.5 10 Q23 16 18 17 Q14 17.5 15 21 Q15 24 11 23.5 Q1 22 1 12 Q1 1 12 1 Z" fill="#2fa6ee"/><circle cx="4" cy="12" r="2.2" fill="#e03a2a"/><circle cx="7" cy="6.5" r="2" fill="#3ab04a"/><circle cx="12" cy="4.5" r="2" fill="#f8c020"/><path d="M17.5 9 L17 23" stroke="#a85a1a" stroke-width="3"/><rect x="15.5" y="7.5" width="4" height="2.5" fill="#f0d8a8"/><path d="M11 11 L12 12.5 L11 14 L10 12.5 Z" fill="#fff"/></svg>
<svg class="r" style="left:1279px;top:1044px;" width="24" height="24" viewBox="0 0 24 24"><rect x="2.5" y="2.5" width="11" height="11" fill="#ebebeb"/><path d="M2.5 13 V2.5 H13" fill="none" stroke="#d42020" stroke-width="2.5" stroke-dasharray="2 1"/><path d="M13.5 5 V20 M6 14.5 H21" stroke="#8a8e94" stroke-width="2"/><circle cx="20.5" cy="14.5" r="2.4" fill="#fff" stroke="#1a9af0" stroke-width="1.6"/><circle cx="13.5" cy="21" r="2.4" fill="#fff" stroke="#1a9af0" stroke-width="1.6"/></svg>
<svg class="r" style="left:1323px;top:1044px;" width="24" height="24" viewBox="0 0 24 24"><rect x="0" y="0" width="24" height="24" fill="#000"/><g transform="translate(4,4)"><path d="M0 0 H16 V16 L12 12 V4 H4 Z" fill="#fff"/><path d="M3.6 6 L0 9.6 V16 H6.4 L10 12.4 H3.6 Z" fill="#fff"/></g></svg>
<svg class="r" style="left:1367px;top:1045px;" width="23" height="23" viewBox="0 0 23 23"><rect x="0" y="0" width="23" height="23" rx="3" fill="#333"/><text x="11.5" y="17" font-family="Liberation Sans" font-size="15" font-weight="bold" fill="#ccc" text-anchor="middle">Q</text></svg>
<svg class="r" style="left:1411px;top:1044px;" width="23" height="24" viewBox="0 0 23 24"><rect x="0" y="0" width="23" height="24" rx="3" fill="#2a8ae8"/><path d="M0 18 L8 10 L14 16 L23 9 V24 H0 Z" fill="#80c8ff"/><circle cx="17" cy="5" r="2.5" fill="#fff"/></svg>
<svg class="r" style="left:1455px;top:1044px;" width="24" height="24" viewBox="0 0 24 24"><circle cx="12" cy="12" r="11.5" fill="#b54ad8"/><path d="M10 8 L18 14 L14 15 L16 20 L14 21 L12 16 L9 18 Z" fill="#fff"/></svg>
<div class="r" style="left:1491px;top:1036px;width:40px;height:39px;background:#f6f9fd;border-radius:4px"></div>
<svg class="r" style="left:1499px;top:1044px;" width="24" height="24" viewBox="0 0 24 24"><g transform="scale(1.5)"><path d="M0 0 H16 V16 L12 12 V4 H4 Z" fill="#000"/><path d="M3.6 6 L0 9.6 V16 H6.4 L10 12.4 H3.6 Z" fill="#000"/></g></svg>
<div class="r" style="left:583px;top:1072px;width:6px;height:3px;background:#7a7a7a;border-radius:2px"></div>
<div class="r" style="left:672px;top:1072px;width:6px;height:3px;background:#7a7a7a;border-radius:2px"></div>
<div class="r" style="left:803px;top:1072px;width:6px;height:3px;background:#7a7a7a;border-radius:2px"></div>
<div class="r" style="left:848px;top:1072px;width:6px;height:3px;background:#7a7a7a;border-radius:2px"></div>
<div class="r" style="left:891px;top:1072px;width:6px;height:3px;background:#7a7a7a;border-radius:2px"></div>
<div class="r" style="left:935px;top:1072px;width:6px;height:3px;background:#7a7a7a;border-radius:2px"></div>
<div class="r" style="left:979px;top:1072px;width:6px;height:3px;background:#7a7a7a;border-radius:2px"></div>
<div class="r" style="left:1023px;top:1072px;width:6px;height:3px;background:#7a7a7a;border-radius:2px"></div>
<div class="r" style="left:1067px;top:1072px;width:6px;height:3px;background:#7a7a7a;border-radius:2px"></div>
<div class="r" style="left:1111px;top:1072px;width:6px;height:3px;background:#7a7a7a;border-radius:2px"></div>
<div class="r" style="left:1200px;top:1072px;width:6px;height:3px;background:#7a7a7a;border-radius:2px"></div>
<div class="r" style="left:1244px;top:1072px;width:6px;height:3px;background:#7a7a7a;border-radius:2px"></div>
<div class="r" style="left:1288px;top:1072px;width:6px;height:3px;background:#7a7a7a;border-radius:2px"></div>
<div class="r" style="left:1332px;top:1072px;width:6px;height:3px;background:#7a7a7a;border-radius:2px"></div>
<div class="r" style="left:1376px;top:1072px;width:6px;height:3px;background:#7a7a7a;border-radius:2px"></div>
<div class="r" style="left:1420px;top:1072px;width:6px;height:3px;background:#7a7a7a;border-radius:2px"></div>
<div class="r" style="left:1464px;top:1072px;width:6px;height:3px;background:#7a7a7a;border-radius:2px"></div>
<div class="r" style="left:1153px;top:1072px;width:12px;height:3px;background:#d63040;border-radius:2px"></div>
<div class="r" style="left:1504px;top:1072px;width:16px;height:3px;background:#1a6fd8;border-radius:2px"></div>
<svg class="r" style="left:1690px;top:1050px;" width="14" height="9" viewBox="0 0 14 9"><path d="M1 8 L7 2 L13 8" fill="none" stroke="#222" stroke-width="1.4"/></svg>
<svg class="r" style="left:1713px;top:1049px;" width="17" height="11" viewBox="0 0 17 11"><path d="M4 10.5 H14 Q16.5 10.5 16.5 8 Q16.5 5.5 14 5.5 Q13 1 9 1 Q5.5 1 4.5 4 Q1 4.5 1 7.5 Q1 10.5 4 10.5 Z" fill="#d6d6d6" stroke="#444" stroke-width="1"/></svg>
<svg class="r" style="left:1737px;top:1046px;" width="18" height="18" viewBox="0 0 18 18"><path d="M3 8 Q4 2 10 2 Q13 2 15 5 M15 2 V5 H12" fill="none" stroke="#222" stroke-width="1.3"/><path d="M15 10 Q14 16 8 16 Q5 16 3 13 M3 16 V13 H6" fill="none" stroke="#222" stroke-width="1.3"/><circle cx="13" cy="13" r="3.2" fill="#e00"/></svg>
<svg class="r" style="left:1764px;top:1046px;" width="18" height="18" viewBox="0 0 18 18"><rect x="1" y="3" width="12" height="9" fill="none" stroke="#222" stroke-width="1.2"/><path d="M4 16 H11 M7 12 V16" stroke="#222" stroke-width="1.2"/><rect x="13" y="1" width="3" height="10" fill="#fff" stroke="#222"/></svg>
<svg class="r" style="left:1789px;top:1048px;" width="16" height="14" viewBox="0 0 16 14"><path d="M1 5 H4 L8 1 V13 L4 9 H1 Z" fill="none" stroke="#222" stroke-width="1.1"/><path d="M10 4 Q12 7 10 10 M12 2 Q15 7 12 12" fill="none" stroke="#999" stroke-width="1"/></svg>
<div class="t" style="left:1828.00px;top:1041.84px;font-size:12px;line-height:12px;color:#111;transform:scaleX(0.9458);transform-origin:0 0;">12:23 AM</div>
<div class="t" style="left:1821.50px;top:1057.84px;font-size:12px;line-height:12px;color:#111;transform:scaleX(1.0211);transform-origin:0 0;">2/28/2025</div>
<svg class="r" style="left:1884px;top:1048px;" width="17" height="17" viewBox="0 0 17 17"><path d="M3 12 V7 Q3 2 8.5 2 Q14 2 14 7 V12 L15.5 14 H1.5 Z" fill="#222"/><rect x="6.5" y="14" width="4" height="2" fill="#222"/><text x="8.5" y="11" font-size="6" fill="#fff" font-family="Liberation Sans" font-weight="bold" text-anchor="middle">z</text><text x="13" y="4" font-size="5" fill="#222" font-family="Liberation Sans" font-weight="bold">z</text></svg>
</body></html>
